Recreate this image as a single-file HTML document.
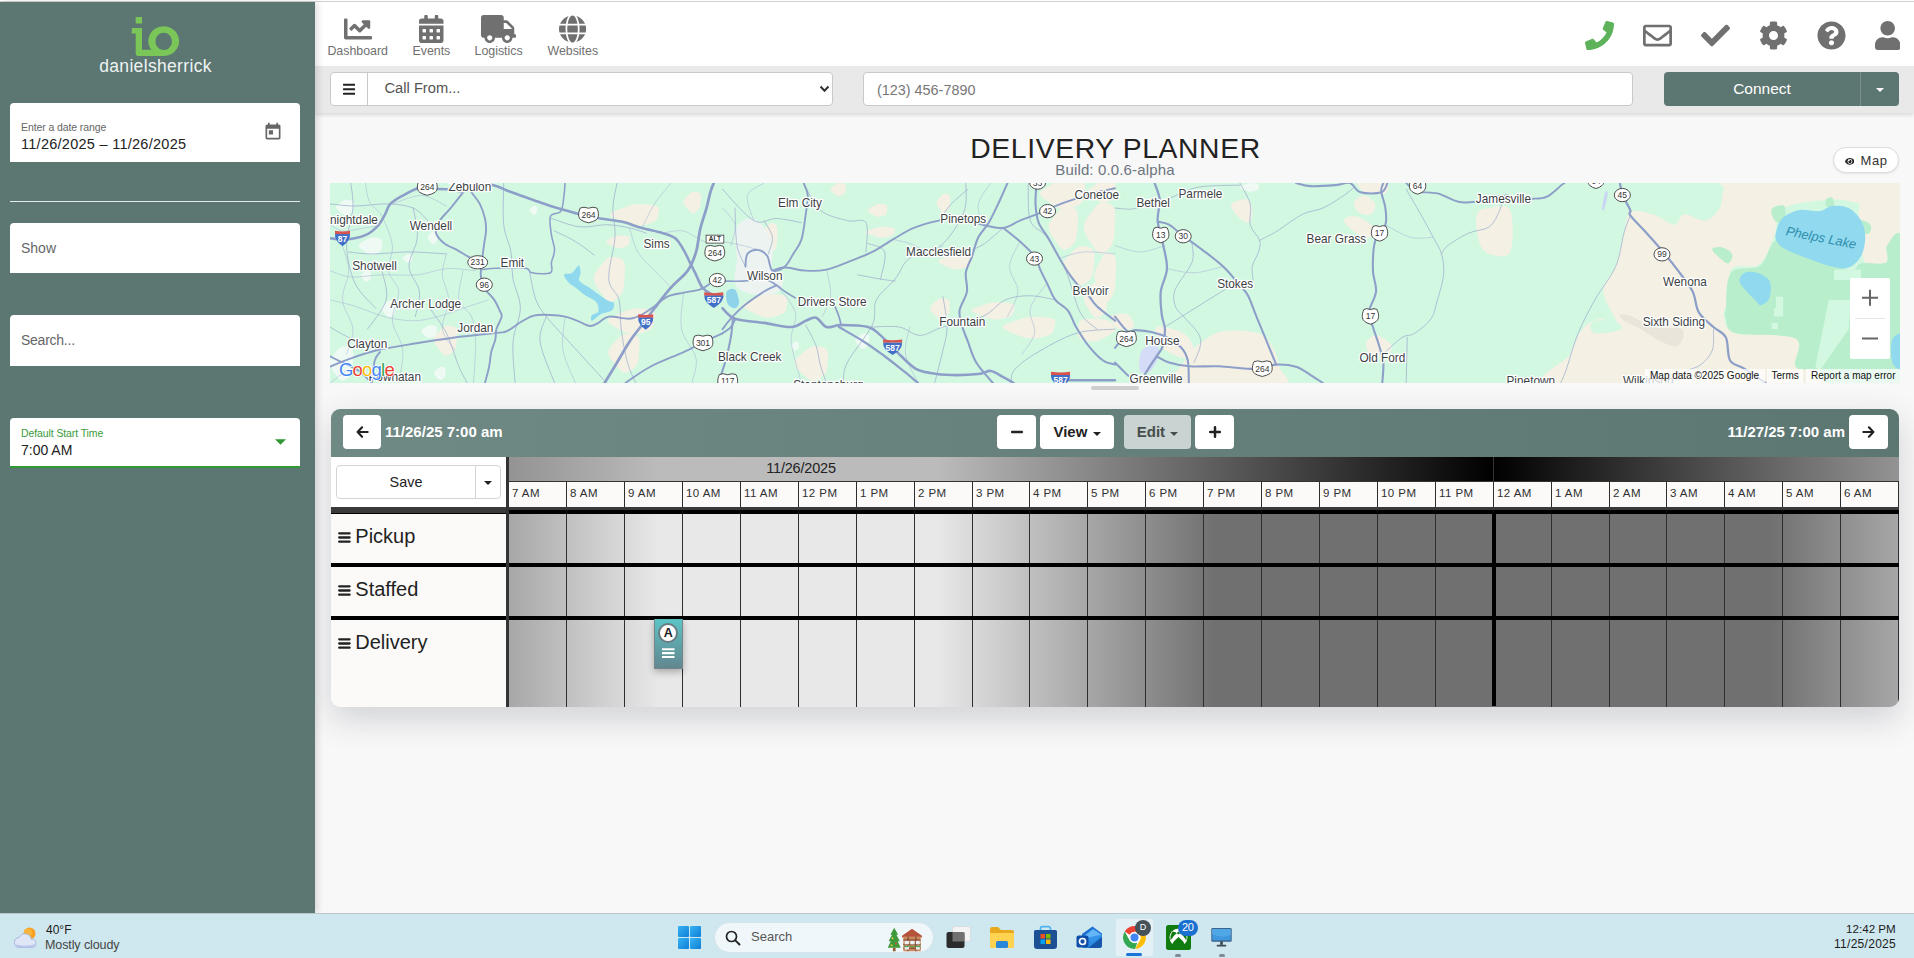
<!DOCTYPE html>
<html lang="en">
<head>
<meta charset="utf-8">
<title>Delivery Planner</title>
<style>
*{box-sizing:border-box;margin:0;padding:0}
html,body{width:1914px;height:958px;overflow:hidden;background:#f8f8f8;font-family:"Liberation Sans",sans-serif;color:#222}
.abs{position:absolute}
#topline{position:absolute;left:0;top:0;width:1914px;height:2px;background:#fff;border-bottom:1px solid #d0d0d0}
/* ---------- sidebar ---------- */
#side{position:absolute;left:0;top:2px;width:315px;height:911px;background:#5c7672;box-shadow:3px 0 6px rgba(0,0,0,.13);z-index:5}
#side .brand{position:absolute;left:-2px;width:315px;top:54px;text-align:center;color:#eef3f2;font-size:17.5px;letter-spacing:0.33px;line-height:20px}
.field{position:absolute;left:10px;width:290px;background:#fff;border-radius:4px 4px 0 0}
.field .lbl{position:absolute;left:11px;font-size:10.5px;letter-spacing:-0.1px;color:#666;white-space:nowrap}
.field .val{position:absolute;left:11px;font-size:14.5px;letter-spacing:0.27px;color:#222;white-space:nowrap}
.field .ph{position:absolute;left:11px;font-size:14px;color:#666;white-space:nowrap}
/* ---------- top nav ---------- */
#nav{position:absolute;left:315px;top:2px;width:1599px;height:64px;background:#fff}
.nlab{position:absolute;top:42px;width:80px;text-align:center;white-space:nowrap;line-height:14px;font-size:12.400px;color:#707070}
.navitem{position:absolute;top:0;text-align:center;color:#707070;font-size:11.5px}
.navitem span{position:absolute;top:42px;left:0;width:100%;text-align:center;white-space:nowrap;line-height:14px}
/* ---------- toolbar ---------- */
#tool{position:absolute;left:315px;top:66px;width:1599px;height:47px;background:#e9e9e9;box-shadow:0 2px 4px rgba(0,0,0,.13)}
/* ---------- main ---------- */
#title{position:absolute;left:331.500px;width:1568px;top:129.500px;text-align:center;font-size:28.300px;line-height:36px;color:#222;letter-spacing:0.620px;white-space:nowrap}
#build{position:absolute;left:331px;width:1568px;top:161px;text-align:center;font-size:15px;letter-spacing:0.15px;line-height:17px;color:#6c757d;white-space:nowrap}
#mapbtn{position:absolute;left:1833px;top:147px;width:66px;height:26px;border:1px solid #dcdcdc;border-radius:13px;background:#fff;font-size:13.5px;color:#333;box-shadow:0 1px 2px rgba(0,0,0,.08)}
#map{position:absolute;left:330px;top:183px;width:1570px;height:200px;overflow:hidden;background:#d3f8e2}
#handle{position:absolute;left:1091px;top:386px;width:48px;height:4px;border-radius:2px;background:#cfcfcf}
/* ---------- planner ---------- */
#plan{position:absolute;left:331px;top:409px;width:1568px;height:298px;border-radius:9px;overflow:hidden;background:#fbfaf9;box-shadow:0 12px 34px rgba(30,38,60,.185)}
#phead{position:absolute;left:0;top:0;width:1568px;height:48px;background:linear-gradient(90deg,#70897f 0%,#6f8984 0%,#5c7672 100%)}
.pbtn{position:absolute;top:6px;height:34px;background:#fff;border-radius:4px;color:#222;font-weight:bold;font-size:15px;text-align:center;line-height:34px}
.ptxt{position:absolute;top:6px;height:34px;line-height:34px;color:#fff;font-weight:bold;font-size:15px;white-space:nowrap;letter-spacing:0}

.caret.abs{position:absolute}
.caret{display:inline-block;width:0;height:0;border-left:4.5px solid transparent;border-right:4.5px solid transparent;border-top:4.5px solid #222;vertical-align:1px;margin-left:1px}
.dg{background:linear-gradient(90deg,#000 0%,#929292 29%,#bbb 40%,#bbb 60%,#000 100%)}
.rg{background:linear-gradient(90deg,#707070 0%,#707070 20%,#e8e8e8 40%,#e8e8e8 60%,#707070 80%,#707070 100%)}
.tl{position:absolute;top:73px;height:25px;line-height:23px;font-size:11.500px;letter-spacing:0.450px;color:#303030;white-space:nowrap}
.vl{position:absolute;width:1px;background:#2e2e2e}
.rl{position:absolute;left:7px;height:49px;white-space:nowrap;color:#222}
.rl svg{position:absolute;left:0;top:18px}
.rl span{position:absolute;left:17.300px;top:2px;font-size:20px;line-height:40px}
/* ---------- taskbar ---------- */
#task{z-index:6;position:absolute;left:0;top:913px;width:1914px;height:45px;background:#cfe7ee;border-top:1px solid #b9c6ca}
</style>
</head>
<body>
<div id="topline"></div>

<!-- SIDEBAR -->
<div id="side">
  <svg class="abs" style="left:128px;top:12px" width="56" height="44" viewBox="128 14 56 44">
    <g fill="#7ac658">
      <rect x="135.7" y="17" width="6.3" height="6.5"/>
      <path d="M132 28 H142 V49.800 H163 V56 H138.500 a2.8 2.8 0 0 1 -2.8 -2.8 V33.6 H131.5 Z"/>
      <path fill-rule="evenodd" d="M163.700 26.350 a15.450 14.800 0 1 0 0.010 0 Z M163.700 32.700 a8.200 8.700 0 1 1 -0.010 0 Z"/>
    </g>
  </svg>
  <div class="brand">danielsherrick</div>

  <div class="field" id="f1" style="top:101px;height:59px">
    <div class="lbl" style="top:18px">Enter a date range</div>
    <div class="val" style="top:33px">11/26/2025 – 11/26/2025</div>
    <svg class="abs" style="left:252.700px;top:18.500px" width="20" height="20" viewBox="0 0 24 24"><path fill="#666" d="M19 3h-1V1h-2v2H8V1H6v2H5c-1.11 0-2 .9-2 2v14c0 1.1.89 2 2 2h14c1.1 0 2-.9 2-2V5c0-1.1-.9-2-2-2zm0 16H5V8h14v11zM7 10h5v5H7z"/></svg>
  </div>
  <div class="abs" style="left:10px;top:199px;width:290px;height:1px;background:#e6ecea"></div>
  <div class="field" id="f2" style="top:221px;height:50px"><div class="ph" style="top:17px">Show</div></div>
  <div class="field" id="f3" style="top:313px;height:51px"><div class="ph" style="top:17px;letter-spacing:-0.25px">Search...</div></div>
  <div class="field" id="f4" style="top:416px;height:50px;border-bottom:2px solid #2f9a33">
    <div class="lbl" style="top:9px;color:#3a9a3c">Default Start Time</div>
    <div class="val" style="top:24px;letter-spacing:0;font-size:14px">7:00 AM</div>
    <svg class="abs" style="left:265px;top:21px" width="11" height="6" viewBox="0 0 10 5"><path d="M0 0h10L5 5z" fill="#2f9a33"/></svg>
  </div>
</div>

<!-- TOP NAV -->
<div id="nav">
<svg class="abs" style="left:28.7px;top:12.5px" width="28.00" height="28" viewBox="0 0 512 512"><path fill="#707070" d="M496 384H64V80c0-8.84-7.16-16-16-16H16C7.16 64 0 71.16 0 80v336c0 17.67 14.33 32 32 32h464c8.84 0 16-7.16 16-16v-32c0-8.84-7.16-16-16-16zM464 96H345.94c-21.38 0-32.09 25.85-16.97 40.97l32.4 32.4L288 242.75l-73.37-73.37c-12.5-12.5-32.76-12.5-45.25 0l-68.69 68.69c-6.25 6.25-6.25 16.38 0 22.63l22.62 22.62c6.25 6.25 16.38 6.25 22.63 0L192 237.25l73.37 73.37c12.5 12.5 32.76 12.5 45.25 0l96-96 32.4 32.4c15.12 15.12 40.97 4.41 40.97-16.97V112c.01-8.84-7.15-16-15.99-16z"/></svg>
<div class="nlab" style="left:2.7px">Dashboard</div>
<svg class="abs" style="left:104.1px;top:12.5px" width="24.50" height="28" viewBox="0 0 448 512"><path fill="#707070" d="M0 464c0 26.5 21.5 48 48 48h352c26.5 0 48-21.5 48-48V192H0v272zm320-196c0-6.6 5.4-12 12-12h40c6.6 0 12 5.4 12 12v40c0 6.6-5.4 12-12 12h-40c-6.6 0-12-5.4-12-12v-40zm0 128c0-6.6 5.4-12 12-12h40c6.6 0 12 5.4 12 12v40c0 6.6-5.4 12-12 12h-40c-6.6 0-12-5.4-12-12v-40zM192 268c0-6.6 5.4-12 12-12h40c6.6 0 12 5.4 12 12v40c0 6.6-5.4 12-12 12h-40c-6.6 0-12-5.4-12-12v-40zm0 128c0-6.6 5.4-12 12-12h40c6.6 0 12 5.4 12 12v40c0 6.6-5.4 12-12 12h-40c-6.6 0-12-5.4-12-12v-40zM64 268c0-6.6 5.4-12 12-12h40c6.6 0 12 5.4 12 12v40c0 6.6-5.4 12-12 12H76c-6.6 0-12-5.4-12-12v-40zm0 128c0-6.6 5.4-12 12-12h40c6.6 0 12 5.4 12 12v40c0 6.6-5.4 12-12 12H76c-6.6 0-12-5.4-12-12v-40zM400 64h-48V16c0-8.8-7.2-16-16-16h-32c-8.8 0-16 7.2-16 16v48H160V16c0-8.8-7.2-16-16-16h-32c-8.8 0-16 7.2-16 16v48H48C21.5 64 0 85.5 0 112v48h448v-48c0-26.5-21.5-48-48-48z"/></svg>
<div class="nlab" style="left:76.4px">Events</div>
<svg class="abs" style="left:166.1px;top:12.5px" width="35.00" height="28" viewBox="0 0 640 512"><path fill="#707070" d="M624 352h-16V243.9c0-12.7-5.1-24.9-14.1-33.9L494 110.100c-9-9-21.2-14.1-33.9-14.1H416V48c0-26.5-21.5-48-48-48H48C21.5 0 0 21.5 0 48v320c0 26.5 21.5 48 48 48h16c0 53 43 96 96 96s96-43 96-96h128c0 53 43 96 96 96s96-43 96-96h48c8.8 0 16-7.2 16-16v-32c0-8.8-7.2-16-16-16zM160 464c-26.5 0-48-21.5-48-48s21.5-48 48-48 48 21.5 48 48-21.5 48-48 48zm320 0c-26.5 0-48-21.5-48-48s21.5-48 48-48 48 21.5 48 48-21.5 48-48 48zm80-208H416V144h44.1l99.900 99.900V256z"/></svg>
<div class="nlab" style="left:143.6px">Logistics</div>
<svg class="abs" style="left:244.2px;top:12.5px" width="27.12" height="28" viewBox="0 0 496 512"><path fill="#707070" d="M336.5 160C322 70.7 287.8 8 248 8s-74 62.7-88.5 152h177zM152 256c0 22.2 1.2 43.5 3.300 64h185.300c2.100-20.500 3.300-41.800 3.300-64s-1.200-43.500-3.300-64H155.300c-2.100 20.500-3.300 41.800-3.300 64zm324.700-96c-28.600-67.900-86.500-120.400-158-141.600 24.400 33.800 41.200 84.700 50 141.600h108zM177.200 18.400C105.800 39.600 47.800 92.100 19.300 160h108c8.700-56.900 25.500-107.800 49.900-141.600zM487.400 192H372.700c2.100 21 3.300 42.500 3.300 64s-1.200 43-3.300 64h114.600c5.500-20.500 8.600-41.800 8.600-64s-3.100-43.500-8.500-64zM120 256c0-21.500 1.200-43 3.300-64H8.600C3.200 212.500 0 233.800 0 256s3.200 43.500 8.600 64h114.600c-2-21-3.200-42.500-3.200-64zm39.500 96c14.500 89.300 48.700 152 88.500 152s74-62.700 88.500-152h-177zm159.300 141.600c71.400-21.200 129.400-73.700 158-141.600h-108c-8.800 56.900-25.600 107.800-50 141.600zM19.300 352c28.600 67.900 86.500 120.400 158 141.600-24.400-33.800-41.200-84.700-50-141.600h-108z"/></svg>
<div class="nlab" style="left:217.8px">Websites</div>
<svg class="abs" style="left:1270.0px;top:19px" width="29.00" height="29" viewBox="0 0 512 512"><path fill="#5eb25a" d="M493.4 24.6l-104-24c-11.3-2.6-22.9 3.300-27.500 13.900l-48 112c-4.200 9.800-1.400 21.300 6.900 28l60.600 49.600c-36 76.700-98.900 140.500-177.200 177.200l-49.600-60.600c-6.800-8.300-18.200-11.100-28-6.900l-112 48C3.900 366.500-2 378.100.6 389.400l24 104C27.100 504.200 36.700 512 48 512c256.100 0 464-207.500 464-464 0-11.200-7.700-20.900-18.600-23.400z"/></svg>
<svg class="abs" style="left:1328.0px;top:19px" width="29.00" height="29" viewBox="0 0 512 512"><path fill="#707070" d="M464 64H48C21.490 64 0 85.490 0 112v288c0 26.510 21.490 48 48 48h416c26.510 0 48-21.490 48-48V112c0-26.510-21.490-48-48-48zm0 48v40.805c-22.422 18.259-58.168 46.651-134.587 106.490-16.841 13.247-50.201 45.072-73.413 44.701-23.208.375-56.579-31.459-73.413-44.701C106.180 199.465 70.425 171.067 48 152.805V112h416zM48 400V214.398c22.914 18.251 55.409 43.862 104.938 82.646 21.857 17.205 60.134 55.186 103.062 54.955 42.717.231 80.509-37.199 103.053-54.947 49.528-38.783 82.032-64.401 104.947-82.653V400H48z"/></svg>
<svg class="abs" style="left:1386.0px;top:19px" width="29.00" height="29" viewBox="0 0 512 512"><path fill="#707070" d="M173.898 439.404l-166.400-166.400c-9.997-9.997-9.997-26.206 0-36.204l36.203-36.204c9.997-9.998 26.207-9.998 36.204 0L192 312.690 432.095 72.596c9.997-9.997 26.207-9.997 36.204 0l36.203 36.204c9.997 9.997 9.997 26.206 0 36.204l-294.400 294.401c-9.998 9.997-26.207 9.997-36.204-.001z"/></svg>
<svg class="abs" style="left:1444.0px;top:19px" width="29.00" height="29" viewBox="0 0 512 512"><path fill="#707070" d="M487.4 315.700l-42.600-24.600c4.300-23.200 4.300-47 0-70.200l42.600-24.600c4.900-2.800 7.100-8.600 5.500-14-11.100-35.600-30-67.800-54.700-94.600-3.800-4.100-10-5.100-14.800-2.300L380.800 110c-17.900-15.400-38.500-27.300-60.800-35.100V25.800c0-5.600-3.900-10.500-9.400-11.700-36.700-8.200-74.300-7.800-109.200 0-5.500 1.200-9.400 6.100-9.400 11.700V75c-22.200 7.900-42.800 19.800-60.800 35.100L88.700 85.500c-4.900-2.800-11-1.900-14.800 2.300-24.700 26.700-43.600 58.900-54.700 94.600-1.700 5.400.6 11.200 5.500 14L67.300 221c-4.300 23.200-4.300 47 0 70.200l-42.600 24.600c-4.900 2.800-7.100 8.600-5.500 14 11.100 35.600 30 67.800 54.700 94.600 3.800 4.100 10 5.100 14.800 2.300l42.600-24.600c17.900 15.400 38.500 27.300 60.800 35.100v49.200c0 5.600 3.900 10.500 9.400 11.700 36.700 8.200 74.300 7.800 109.200 0 5.500-1.200 9.400-6.100 9.400-11.700v-49.200c22.200-7.900 42.800-19.800 60.800-35.100l42.600 24.600c4.900 2.800 11 1.900 14.800-2.300 24.700-26.700 43.600-58.900 54.700-94.600 1.500-5.500-.7-11.300-5.600-14.100zM256 336c-44.100 0-80-35.900-80-80s35.900-80 80-80 80 35.900 80 80-35.900 80-80 80z"/></svg>
<svg class="abs" style="left:1502.0px;top:19px" width="29.00" height="29" viewBox="0 0 512 512"><path fill="#707070" d="M504 256c0 136.997-111.043 248-248 248S8 392.997 8 256C8 119.083 119.043 8 256 8s248 111.083 248 248zM262.655 90c-54.497 0-89.255 22.957-116.549 63.758-3.536 5.286-2.353 12.415 2.715 16.258l34.699 26.310c5.205 3.947 12.621 3.008 16.665-2.122 17.864-22.658 30.113-35.797 57.303-35.797 20.429 0 45.698 13.148 45.698 32.958 0 14.976-12.363 22.667-32.534 33.976C247.128 238.528 216 254.941 216 296v4c0 6.627 5.373 12 12 12h56c6.627 0 12-5.373 12-12v-1.333c0-28.462 83.186-29.647 83.186-106.667 0-58.002-60.165-102-116.531-102zM256 338c-25.365 0-46 20.635-46 46 0 25.364 20.635 46 46 46s46-20.636 46-46c0-25.365-20.635-46-46-46z"/></svg>
<svg class="abs" style="left:1560.0px;top:19px" width="25.38" height="29" viewBox="0 0 448 512"><path fill="#707070" d="M224 256c70.700 0 128-57.300 128-128S294.700 0 224 0 96 57.300 96 128s57.300 128 128 128zm89.600 32h-16.700c-22.200 10.200-46.900 16-72.900 16s-50.600-5.800-72.900-16h-16.700C60.200 288 0 348.200 0 422.400V464c0 26.500 21.500 48 48 48h352c26.500 0 48-21.500 48-48v-41.600c0-74.200-60.200-134.400-134.400-134.400z"/></svg>
</div>

<!-- TOOLBAR -->
<div id="tool">
<div class="abs" style="left:15px;top:6px;width:503px;height:34px;background:#fff;border:1px solid #c9c9c9;border-radius:4px"></div>
<div class="abs" style="left:52px;top:6px;width:1px;height:34px;background:#c9c9c9"></div>
<svg class="abs" style="left:27.5px;top:15.5px" width="12.69" height="14.5" viewBox="0 0 448 512"><path fill="#222" d="M16 132h416c8.837 0 16-7.163 16-16V76c0-8.837-7.163-16-16-16H16C7.163 60 0 67.163 0 76v40c0 8.837 7.163 16 16 16zm0 160h416c8.837 0 16-7.163 16-16v-40c0-8.837-7.163-16-16-16H16c-8.837 0-16 7.163-16 16v40c0 8.837 7.163 16 16 16zm0 160h416c8.837 0 16-7.163 16-16v-40c0-8.837-7.163-16-16-16H16c-8.837 0-16 7.163-16 16v40c0 8.837 7.163 16 16 16z"/></svg>
<div class="abs" id="callfrom" style="left:69.500px;top:6px;height:34px;line-height:33px;font-size:14.7px;color:#555;white-space:nowrap">Call From...</div>
<svg class="abs" style="left:504px;top:19px" width="11" height="8" viewBox="0 0 11 8"><path d="M1.5 1.5L5.5 5.8L9.500 1.500" fill="none" stroke="#333" stroke-width="2"/></svg>
<div class="abs" style="left:548px;top:6px;width:770px;height:34px;background:#fff;border:1px solid #c9c9c9;border-radius:4px"></div>
<div class="abs" id="phoneph" style="left:562px;top:6.500px;height:34px;line-height:34px;font-size:14.400px;color:#777;white-space:nowrap">(123) 456-7890</div>
<div class="abs" style="left:1349px;top:6px;width:235px;height:34px;background:#5c7672;border-radius:4px"></div>
<div class="abs" style="left:1545px;top:6px;width:1px;height:34px;background:#7b918d"></div>
<div class="abs" id="connect" style="left:1349px;top:6px;width:196px;height:34px;line-height:33px;font-size:15.5px;color:#fff;text-align:center">Connect</div>
<i class="caret abs" style="left:1560px;top:22px;border-top-color:#fff;border-width:4.5px 4.5px 0 4.5px"></i>
</div>

<!-- MAIN -->
<div id="title">DELIVERY PLANNER</div>
<div id="build">Build: 0.0.6-alpha</div>
<div id="mapbtn"><svg class="abs" style="left:10.500px;top:8.500px" width="9.90" height="8.8" viewBox="0 0 576 512"><path fill="#222" d="M572.52 241.400C518.290 135.590 410.930 64 288 64S57.680 135.640 3.480 241.410a32.350 32.350 0 0 0 0 29.190C57.710 376.410 165.070 448 288 448s230.320-71.640 284.520-177.410a32.350 32.350 0 0 0 0-29.190zM288 400a144 144 0 1 1 144-144 143.930 143.930 0 0 1-144 144zm0-240a95.310 95.310 0 0 0-25.310 3.790 47.850 47.850 0 0 1-66.900 66.900A95.780 95.780 0 1 0 288 160z"/></svg><div class="abs" style="left:26.500px;top:0.500px;height:24px;line-height:24px;font-size:13px;letter-spacing:0.550px;color:#333">Map</div></div>
<div id="map">
<!--MAP-->
<svg class="abs" style="left:0;top:0" width="1570" height="200" viewBox="-1 0 1570 200">
<rect x="-1" width="1570" height="200" fill="#d3f8e2"/>
<g transform="translate(-1 0) scale(1.00128 1.00503)">
<path d="M1298.6 29.1 C1303.4 26.0 1314.1 29.1 1321.4 31.2 C1328.7 33.2 1337.0 41.5 1342.2 41.5 C1347.4 41.5 1347.4 31.9 1352.6 31.2 C1357.8 30.5 1367.5 38.4 1373.3 37.4 C1379.2 36.4 1384.8 30.1 1387.9 24.9 C1391.0 19.7 1389.6 11.1 1392.0 6.2 C1394.5 1.4 1372.6 -2.4 1402.4 -4.2 C1432.2 -5.9 1542.6 -9.3 1570.7 -4.2 C1598.7 1.0 1577.6 22.9 1570.7 27.0 C1563.8 31.2 1540.9 22.5 1529.1 20.8 C1517.4 19.0 1512.9 15.9 1500.1 16.6 C1487.2 17.3 1462.0 18.7 1452.3 24.9 C1442.6 31.2 1446.0 44.7 1441.9 54.0 C1437.7 63.4 1434.3 75.8 1427.4 81.0 C1420.4 86.2 1405.5 79.3 1400.3 85.2 C1395.2 91.1 1397.6 108.4 1396.2 116.3 C1394.8 124.3 1390.7 127.4 1392.0 132.9 C1393.4 138.5 1392.7 146.1 1404.5 149.6 C1416.3 153.0 1452.3 148.5 1462.7 153.7 C1473.1 158.9 1462.7 175.2 1466.8 180.7 C1471.0 186.3 1482.1 183.1 1487.6 187.0 C1493.1 190.8 1543.3 200.8 1500.1 203.6 C1456.8 206.3 1271.6 209.1 1227.9 203.6 C1184.3 198.0 1234.5 180.0 1238.3 170.3 C1242.1 160.6 1245.6 151.3 1250.8 145.4 C1256.0 139.5 1263.2 135.0 1269.5 135.0 C1275.7 135.0 1287.8 149.9 1288.2 145.4 C1288.5 140.9 1272.2 118.4 1271.6 108.0 C1270.9 97.6 1280.6 92.8 1284.0 83.1 C1287.5 73.4 1289.9 58.9 1292.3 49.9 C1294.8 40.9 1293.7 32.2 1298.6 29.1 Z" fill="#f4f0e4"/>
<path d="M1529.1 18.7 C1535.4 9.0 1563.8 15.6 1570.7 22.9 C1577.6 30.1 1573.1 55.7 1570.7 62.3 C1568.3 68.9 1558.9 59.5 1556.1 62.3 C1553.4 65.1 1557.9 75.8 1554.1 78.9 C1550.3 82.1 1537.4 91.1 1533.3 81.0 C1529.1 71.0 1522.9 28.4 1529.1 18.7 Z" fill="#f4f0e4"/>
<path d="M1394.1 124.6 C1395.0 117.0 1393.6 96.4 1399.3 89.3 C1405.0 82.2 1420.9 87.4 1428.4 82.1 C1435.8 76.7 1437.6 59.2 1444.0 57.1 C1450.4 55.0 1454.7 64.7 1466.8 69.6 C1478.9 74.4 1506.3 84.5 1516.7 86.2 C1527.1 87.9 1522.9 81.2 1529.1 80.0 C1535.4 78.8 1549.7 81.9 1554.1 78.9 C1558.4 76.0 1552.3 65.4 1555.1 62.3 C1557.9 59.2 1568.1 36.7 1570.7 60.2 C1573.3 83.8 1582.5 179.7 1570.7 203.6 C1558.9 227.5 1513.9 206.3 1500.1 203.6 C1486.2 200.8 1493.6 190.4 1487.6 187.0 C1481.5 183.5 1467.7 188.2 1463.7 182.8 C1459.7 177.4 1473.6 160.3 1463.7 154.8 C1453.8 149.2 1416.1 152.9 1404.5 149.6 C1392.9 146.3 1395.8 139.2 1394.1 135.0 C1392.4 130.9 1393.2 132.3 1394.1 124.6 Z" fill="#b8eecb"/>
<path d="M1380.6 65.4 C1381.3 64.0 1386.7 63.1 1390.0 64.0 C1393.2 64.8 1399.3 68.0 1400.3 70.6 C1401.4 73.3 1398.6 79.6 1396.2 80.0 C1393.8 80.3 1388.4 75.1 1385.8 72.7 C1383.2 70.3 1379.9 66.9 1380.6 65.4 Z" fill="#b8eecb"/>
<path d="M1439.8 26.0 C1441.4 23.5 1450.2 20.6 1452.3 22.9 C1454.4 25.1 1453.8 37.0 1452.3 39.5 C1450.7 41.9 1445.0 39.6 1442.9 37.4 C1440.9 35.1 1438.3 28.4 1439.8 26.0 Z" fill="#b8eecb"/>
<path d="M1493.8 16.6 C1494.7 15.1 1498.7 13.5 1500.1 14.5 C1501.4 15.6 1503.0 21.3 1502.1 22.9 C1501.3 24.4 1496.2 24.9 1494.9 23.9 C1493.5 22.9 1493.0 18.2 1493.8 16.6 Z" fill="#b8eecb"/>
<path d="M1529.1 37.4 C1530.5 36.2 1537.1 39.5 1538.5 41.5 C1539.9 43.6 1538.8 48.6 1537.4 49.9 C1536.1 51.1 1531.6 50.9 1530.2 48.8 C1528.8 46.7 1527.8 38.6 1529.1 37.4 Z" fill="#b8eecb"/>
<path d="M1496.9 116.3 L1518.8 116.3 L1516.7 145.4 L1487.6 187.0 L1483.4 182.8 Z" fill="#d3f8e2"/>
<rect x="1502.1" y="86.2" width="27.0" height="10.4" fill="#d3f8e2"/>
<path d="M1444.0 113.2 h7.3 v19.7 h-9.3 v-8.3 h2.1 Z" fill="#d3f8e2"/>
<rect x="1439.8" y="139.2" width="6.2" height="6.2" fill="#d3f8e2"/>
<path d="M1263.2 137.1 C1267.4 135.9 1279.7 136.8 1284.0 138.1 C1288.3 139.5 1292.0 143.5 1289.2 145.4 C1286.4 147.3 1272.4 149.6 1267.4 149.6 C1262.4 149.6 1259.8 147.5 1259.1 145.4 C1258.4 143.3 1259.1 138.3 1263.2 137.1 Z" fill="#d3f8e2"/>
<path d="M1288.2 130.9 C1289.6 130.2 1295.1 130.9 1300.6 132.9 C1306.2 135.0 1313.1 141.3 1321.4 143.3 C1329.7 145.4 1346.3 142.3 1350.5 145.4 C1354.6 148.5 1349.8 160.0 1346.3 162.0 C1342.9 164.1 1336.0 160.6 1329.7 157.9 C1323.5 155.1 1315.2 148.9 1308.9 145.4 C1302.7 141.9 1295.8 139.5 1292.3 137.1 C1288.9 134.7 1286.8 131.6 1288.2 130.9 Z" fill="#e9e5da"/>
<path d="M1444.0 49.9 C1444.8 46.0 1446.4 39.1 1450.2 35.3 C1454.0 31.5 1460.6 28.2 1466.8 27.0 C1473.1 25.8 1482.1 28.7 1487.6 28.0 C1493.1 27.4 1495.2 23.4 1500.1 22.9 C1504.9 22.3 1511.8 22.5 1516.7 24.9 C1521.5 27.4 1526.4 32.5 1529.1 37.4 C1531.9 42.2 1533.3 48.1 1533.3 54.0 C1533.3 59.9 1531.9 67.7 1529.1 72.7 C1526.4 77.7 1521.5 82.4 1516.7 84.1 C1511.8 85.9 1507.0 84.6 1500.1 83.1 C1493.1 81.5 1482.7 77.6 1475.1 74.8 C1467.5 72.0 1459.4 69.2 1454.4 66.5 C1449.3 63.7 1446.7 60.9 1445.0 58.2 C1443.3 55.4 1443.1 53.7 1444.0 49.9 Z" fill="#90d9ee"/>
<path d="M1407.6 97.6 C1407.3 94.5 1409.9 90.7 1412.8 89.3 C1415.8 87.9 1421.1 87.9 1425.3 89.3 C1429.4 90.7 1435.7 93.5 1437.7 97.6 C1439.8 101.8 1439.1 110.3 1437.7 114.3 C1436.4 118.2 1431.9 121.2 1429.4 121.5 C1427.0 121.9 1425.6 118.6 1423.2 116.3 C1420.8 114.1 1417.5 111.1 1414.9 108.0 C1412.3 104.9 1408.0 100.7 1407.6 97.6 Z" fill="#90d9ee"/>
<path d="M1560.3 155.8 C1562.0 151.3 1569.0 147.0 1570.7 151.6 C1572.4 156.3 1572.4 179.3 1570.7 183.8 C1569.0 188.3 1562.0 183.3 1560.3 178.6 C1558.6 174.0 1558.6 160.3 1560.3 155.8 Z" fill="#90d9ee"/>
<path d="M1270.5 24.9 C1270.7 22.2 1272.7 11.8 1273.6 9.3 C1274.6 6.9 1276.3 7.6 1276.1 10.4 C1276.0 13.2 1273.5 23.5 1272.6 26.0 C1271.7 28.4 1270.3 27.7 1270.5 24.9 Z" fill="#c9d5f5"/>
<path d="M900.3 20.8 C902.1 18.0 913.5 14.9 916.9 16.6 C920.4 18.3 921.1 27.4 921.1 31.2 C921.1 35.0 919.4 39.1 916.9 39.5 C914.5 39.8 909.3 36.4 906.6 33.2 C903.8 30.1 898.6 23.5 900.3 20.8 Z" fill="#f4f0e4"/>
<path d="M1012.5 37.4 C1012.5 34.6 1020.1 32.2 1025.0 33.2 C1029.8 34.3 1039.2 40.2 1041.6 43.6 C1044.0 47.1 1042.3 53.0 1039.5 54.0 C1036.7 55.0 1029.5 52.6 1025.0 49.9 C1020.5 47.1 1012.5 40.2 1012.5 37.4 Z" fill="#f4f0e4"/>
<path d="M1022.9 18.7 C1023.9 15.9 1029.8 12.1 1033.3 12.5 C1036.7 12.8 1042.6 17.7 1043.7 20.8 C1044.7 23.9 1042.3 29.8 1039.5 31.2 C1036.7 32.5 1029.8 31.2 1027.0 29.1 C1024.3 27.0 1021.8 21.5 1022.9 18.7 Z" fill="#f4f0e4"/>
<path d="M1027.0 -2.1 C1030.5 -4.0 1049.5 -4.2 1054.0 -2.1 C1058.5 0.0 1057.5 8.5 1054.0 10.4 C1050.6 12.3 1037.8 11.4 1033.3 9.3 C1028.8 7.3 1023.6 -0.2 1027.0 -2.1 Z" fill="#f4f0e4"/>
<path d="M871.2 157.9 C876.8 154.1 882.7 148.9 892.0 147.5 C901.4 146.1 919.0 146.8 927.3 149.6 C935.6 152.3 938.4 158.6 941.9 164.1 C945.3 169.6 946.7 176.2 948.1 182.8 C949.5 189.4 967.1 200.1 950.2 203.6 C933.2 207.0 861.6 209.1 846.3 203.6 C831.1 198.0 854.6 178.0 858.8 170.3 C862.9 162.7 865.7 161.7 871.2 157.9 Z" fill="#f4f0e4"/>
<path d="M1035.4 157.9 C1036.7 155.1 1041.6 150.9 1045.7 151.6 C1049.9 152.3 1058.9 158.6 1060.3 162.0 C1061.7 165.5 1057.9 171.4 1054.0 172.4 C1050.2 173.5 1040.5 170.7 1037.4 168.3 C1034.3 165.8 1034.0 160.6 1035.4 157.9 Z" fill="#f4f0e4"/>
<path d="M1145.4 31.2 C1147.2 25.6 1152.4 25.6 1157.9 24.9 C1163.4 24.2 1175.2 19.7 1178.7 27.0 C1182.1 34.3 1182.1 61.3 1178.7 68.6 C1175.2 75.8 1163.1 72.4 1157.9 70.6 C1152.7 68.9 1149.6 64.7 1147.5 58.2 C1145.4 51.6 1143.7 36.7 1145.4 31.2 Z" fill="#f4f0e4"/>
<path d="M779.8 132.9 C781.2 130.5 792.7 129.1 796.5 130.9 C800.3 132.6 804.1 140.9 802.7 143.3 C801.3 145.8 792.0 147.1 788.2 145.4 C784.3 143.7 778.5 135.4 779.8 132.9 Z" fill="#f4f0e4"/>
<path d="M811.0 166.2 C813.8 162.0 822.8 161.0 825.5 162.0 C828.3 163.1 828.7 168.3 827.6 172.4 C826.6 176.6 822.4 184.5 819.3 187.0 C816.2 189.4 810.3 190.4 808.9 187.0 C807.5 183.5 808.2 170.3 811.0 166.2 Z" fill="#d5dcf7"/>
<path d="M825.5 143.3 C829.0 140.9 846.3 145.8 852.6 149.6 C858.8 153.4 862.6 162.0 862.9 166.2 C863.3 170.3 859.8 174.8 854.6 174.5 C849.4 174.1 836.6 169.3 831.8 164.1 C826.9 158.9 822.1 145.8 825.5 143.3 Z" fill="#f4f0e4"/>
<path d="M515.1 6.2 C515.0 7.7 515.1 9.3 514.0 10.5 C512.8 11.6 510.1 13.1 508.3 13.1 C506.5 13.0 504.5 11.3 503.1 10.2 C501.7 9.0 499.7 7.5 499.8 6.2 C499.8 5.0 502.1 3.6 503.5 2.6 C504.9 1.6 506.4 0.5 508.3 0.2 C510.2 0.0 513.7 0.4 514.8 1.4 C515.9 2.4 515.3 4.7 515.1 6.2 Z" fill="#f4f0e4"/>
<path d="M556.3 27.0 C556.1 28.5 556.3 30.1 554.8 31.2 C553.4 32.4 550.1 33.9 547.8 33.9 C545.5 33.8 543.0 32.1 541.3 30.9 C539.5 29.8 537.0 28.3 537.1 27.0 C537.2 25.7 540.0 24.4 541.8 23.4 C543.6 22.4 545.4 21.2 547.8 21.0 C550.1 20.8 554.5 21.2 555.9 22.2 C557.3 23.2 556.5 25.5 556.3 27.0 Z" fill="#f4f0e4"/>
<path d="M563.7 48.8 C563.4 50.1 563.6 51.4 561.5 52.3 C559.4 53.3 554.3 54.6 550.9 54.5 C547.5 54.5 543.8 53.0 541.1 52.1 C538.4 51.1 534.7 49.9 534.9 48.8 C535.0 47.8 539.2 46.6 541.9 45.8 C544.6 45.0 547.4 44.0 550.9 43.8 C554.4 43.7 560.9 43.9 563.0 44.8 C565.2 45.6 563.9 47.6 563.7 48.8 Z" fill="#f4f0e4"/>
<path d="M619.2 19.7 C619.1 22.0 619.2 24.4 618.2 26.1 C617.2 27.8 614.8 30.1 613.2 30.0 C611.6 29.9 609.9 27.3 608.7 25.6 C607.4 23.9 605.7 21.6 605.7 19.7 C605.8 17.9 607.8 15.8 609.0 14.3 C610.3 12.8 611.6 11.1 613.2 10.8 C614.9 10.5 617.9 11.0 618.9 12.5 C619.9 14.0 619.3 17.5 619.2 19.7 Z" fill="#f4f0e4"/>
<path d="M640.2 77.9 C639.9 79.7 640.1 81.5 637.7 82.8 C635.3 84.2 629.5 86.0 625.7 85.9 C621.8 85.8 617.6 83.8 614.6 82.5 C611.6 81.1 607.4 79.4 607.5 77.9 C607.7 76.4 612.4 74.8 615.5 73.7 C618.5 72.5 621.7 71.2 625.7 70.9 C629.7 70.7 637.0 71.1 639.4 72.2 C641.8 73.4 640.5 76.1 640.2 77.9 Z" fill="#f4f0e4"/>
<path d="M618.6 124.6 C618.5 127.2 618.6 129.8 617.2 131.7 C615.7 133.6 612.4 136.1 610.1 136.1 C607.8 136.0 605.4 133.1 603.6 131.2 C601.8 129.3 599.3 126.7 599.4 124.6 C599.5 122.5 602.3 120.3 604.1 118.6 C605.9 117.0 607.8 115.0 610.1 114.7 C612.5 114.3 616.8 114.9 618.2 116.6 C619.6 118.2 618.8 122.1 618.6 124.6 Z" fill="#f4f0e4"/>
<path d="M682.9 126.7 C682.5 128.7 682.8 130.8 679.6 132.4 C676.5 133.9 669.1 135.9 664.1 135.9 C659.1 135.8 653.7 133.5 649.7 131.9 C645.8 130.4 640.4 128.4 640.6 126.7 C640.8 125.0 647.0 123.2 650.9 121.9 C654.8 120.6 659.0 119.0 664.1 118.7 C669.3 118.5 678.8 118.9 681.9 120.3 C685.0 121.6 683.2 124.7 682.9 126.7 Z" fill="#f4f0e4"/>
<path d="M723.5 143.3 C723.0 145.9 723.3 148.5 719.5 150.4 C715.7 152.3 706.6 154.8 700.5 154.8 C694.4 154.7 687.6 151.8 682.8 149.9 C678.0 148.0 671.4 145.4 671.6 143.3 C671.8 141.2 679.4 139.0 684.2 137.3 C689.0 135.6 694.1 133.7 700.5 133.4 C706.8 133.0 718.5 133.6 722.3 135.3 C726.1 136.9 723.9 140.8 723.5 143.3 Z" fill="#f4f0e4"/>
<path d="M496.8 178.6 C496.5 182.7 496.8 186.9 494.3 189.9 C491.9 193.0 486.2 197.1 482.4 196.9 C478.5 196.8 474.3 192.2 471.2 189.1 C468.2 186.1 464.0 182.0 464.2 178.6 C464.3 175.3 469.1 171.7 472.1 169.0 C475.2 166.4 478.4 163.2 482.4 162.7 C486.4 162.1 493.7 163.1 496.1 165.7 C498.5 168.4 497.1 174.6 496.8 178.6 Z" fill="#f4f0e4"/>
<path d="M456.3 121.5 C455.9 124.3 456.1 127.2 452.9 129.3 C449.6 131.4 441.9 134.2 436.7 134.1 C431.5 134.0 425.7 130.8 421.6 128.7 C417.5 126.6 411.9 123.8 412.1 121.5 C412.3 119.2 418.7 116.7 422.8 114.9 C426.9 113.1 431.3 110.9 436.7 110.6 C442.1 110.2 452.0 110.8 455.2 112.6 C458.5 114.5 456.6 118.7 456.3 121.5 Z" fill="#f4f0e4"/>
<path d="M446.6 54.0 C446.5 57.5 446.6 61.2 445.4 63.9 C444.3 66.5 441.6 70.1 439.8 70.0 C438.0 69.9 436.0 65.8 434.5 63.2 C433.1 60.5 431.2 56.9 431.2 54.0 C431.3 51.1 433.5 47.9 435.0 45.6 C436.4 43.3 437.9 40.5 439.8 40.0 C441.7 39.6 445.1 40.4 446.2 42.7 C447.4 45.0 446.7 50.5 446.6 54.0 Z" fill="#f4f0e4"/>
<path d="M784.6 145.4 C784.2 148.0 779.2 150.6 775.8 152.6 C772.5 154.6 769.0 157.0 764.6 157.4 C760.2 157.8 752.3 157.1 749.5 155.1 C746.6 153.1 747.1 148.5 747.3 145.4 C747.4 142.3 747.5 138.0 750.4 136.3 C753.3 134.6 760.0 135.1 764.6 135.2 C769.1 135.3 774.4 135.2 777.7 136.9 C781.1 138.7 784.9 142.8 784.6 145.4 Z" fill="#f4f0e4"/>
<path d="M753.3 10.4 C752.9 13.9 753.2 17.6 749.9 20.3 C746.7 22.9 738.9 26.5 733.7 26.4 C728.5 26.3 722.8 22.2 718.7 19.5 C714.6 16.9 708.9 13.3 709.1 10.4 C709.3 7.5 715.8 4.3 719.9 2.0 C724.0 -0.4 728.3 -3.1 733.7 -3.6 C739.1 -4.1 749.0 -3.3 752.3 -0.9 C755.6 1.4 753.7 6.9 753.3 10.4 Z" fill="#f4f0e4"/>
<path d="M784.1 8.3 C783.8 10.8 784.0 13.5 782.0 15.4 C780.0 17.3 775.3 19.8 772.1 19.7 C769.0 19.6 765.5 16.7 763.0 14.8 C760.5 12.9 757.0 10.4 757.2 8.3 C757.3 6.2 761.2 3.9 763.7 2.3 C766.2 0.6 768.9 -1.3 772.1 -1.7 C775.4 -2.0 781.5 -1.4 783.5 0.2 C785.4 1.9 784.3 5.8 784.1 8.3 Z" fill="#f4f0e4"/>
<path d="M746.5 43.6 C746.2 48.7 746.4 53.9 744.3 57.7 C742.2 61.5 737.1 66.6 733.7 66.5 C730.3 66.3 726.6 60.5 723.9 56.7 C721.2 52.9 717.5 47.8 717.7 43.6 C717.8 39.4 722.0 34.9 724.7 31.6 C727.4 28.3 730.2 24.4 733.7 23.7 C737.2 23.0 743.7 24.1 745.8 27.5 C748.0 30.8 746.7 38.6 746.5 43.6 Z" fill="#f4f0e4"/>
<path d="M783.7 43.6 C783.4 49.7 783.6 56.0 781.3 60.5 C779.1 65.1 773.7 71.2 770.1 71.0 C766.4 70.8 762.5 63.9 759.6 59.3 C756.8 54.7 752.8 48.6 752.9 43.6 C753.1 38.6 757.6 33.2 760.4 29.2 C763.3 25.2 766.3 20.5 770.1 19.7 C773.8 18.9 780.7 20.2 783.0 24.2 C785.3 28.2 784.0 37.6 783.7 43.6 Z" fill="#f4f0e4"/>
<path d="M762.9 81.0 C762.6 85.6 762.8 90.3 760.6 93.7 C758.3 97.1 752.9 101.7 749.3 101.6 C745.7 101.4 741.7 96.2 738.8 92.8 C736.0 89.4 732.0 84.8 732.2 81.0 C732.3 77.2 736.8 73.2 739.7 70.2 C742.5 67.2 745.5 63.7 749.3 63.1 C753.1 62.4 759.9 63.5 762.2 66.5 C764.5 69.5 763.2 76.5 762.9 81.0 Z" fill="#f4f0e4"/>
<path d="M784.6 92.4 C784.4 98.2 784.6 104.3 783.0 108.7 C781.5 113.0 777.7 118.9 775.3 118.7 C772.8 118.5 770.0 111.9 768.1 107.5 C766.1 103.1 763.4 97.3 763.5 92.4 C763.6 87.6 766.7 82.4 768.6 78.6 C770.6 74.8 772.7 70.3 775.3 69.5 C777.8 68.7 782.6 70.0 784.1 73.9 C785.7 77.7 784.8 86.6 784.6 92.4 Z" fill="#f4f0e4"/>
<path d="M776.1 115.3 C775.9 119.6 776.1 124.0 774.4 127.3 C772.7 130.5 768.6 134.9 765.9 134.7 C763.2 134.6 760.2 129.6 758.1 126.4 C755.9 123.2 753.0 118.8 753.1 115.3 C753.2 111.7 756.5 107.9 758.7 105.1 C760.8 102.2 763.1 98.9 765.9 98.3 C768.7 97.8 773.9 98.7 775.6 101.6 C777.3 104.4 776.3 111.0 776.1 115.3 Z" fill="#f4f0e4"/>
<path d="M404.5 47.8 C406.2 41.2 412.4 36.4 416.9 35.3 C421.4 34.3 427.3 37.0 431.5 41.5 C435.6 46.0 440.1 54.7 441.9 62.3 C443.6 69.9 440.1 81.0 441.9 87.2 C443.6 93.5 451.9 95.9 452.2 99.7 C452.6 103.5 449.5 108.4 443.9 110.1 C438.4 111.8 425.6 111.8 419.0 110.1 C412.4 108.4 406.5 105.6 404.5 99.7 C402.4 93.8 406.5 83.4 406.5 74.8 C406.5 66.1 402.7 54.4 404.5 47.8 Z" fill="#ecf3f0"/>
<path d="M396.2 108.0 C397.4 105.6 402.4 104.2 404.5 105.9 C406.5 107.7 408.6 115.3 408.6 118.4 C408.6 121.5 406.4 124.3 404.5 124.6 C402.6 125.0 398.6 123.3 397.2 120.5 C395.8 117.7 394.9 110.4 396.2 108.0 Z" fill="#8fd3ea"/>
<path d="M294.1 94.5 C293.8 99.8 294.0 105.3 291.7 109.3 C289.4 113.3 284.1 118.7 280.4 118.5 C276.8 118.3 272.8 112.2 270.0 108.2 C267.1 104.2 263.2 98.9 263.3 94.5 C263.5 90.1 267.9 85.4 270.8 81.9 C273.6 78.4 276.7 74.3 280.4 73.6 C284.2 72.9 291.1 74.1 293.4 77.6 C295.6 81.0 294.3 89.2 294.1 94.5 Z" fill="#f4f0e4"/>
<path d="M323.7 137.1 C323.3 140.1 323.6 143.3 320.2 145.6 C316.8 147.8 308.7 150.9 303.3 150.8 C297.8 150.7 291.9 147.2 287.6 144.9 C283.3 142.7 277.4 139.6 277.6 137.1 C277.8 134.6 284.5 131.9 288.8 129.9 C293.1 127.9 297.6 125.5 303.3 125.1 C308.9 124.7 319.3 125.4 322.7 127.4 C326.1 129.4 324.1 134.1 323.7 137.1 Z" fill="#f4f0e4"/>
<path d="M308.6 168.3 C308.3 172.8 308.5 177.5 306.3 181.0 C304.0 184.4 298.6 189.0 295.0 188.8 C291.3 188.7 287.4 183.5 284.5 180.0 C281.7 176.6 277.7 172.0 277.9 168.3 C278.0 164.5 282.5 160.4 285.3 157.4 C288.2 154.4 291.2 150.9 295.0 150.3 C298.7 149.7 305.6 150.7 307.9 153.7 C310.2 156.7 308.9 163.7 308.6 168.3 Z" fill="#f4f0e4"/>
<path d="M327.7 31.2 C327.3 33.7 327.6 36.3 324.0 38.2 C320.5 40.1 312.1 42.7 306.4 42.6 C300.7 42.5 294.5 39.6 290.1 37.7 C285.6 35.8 279.4 33.3 279.7 31.2 C279.9 29.1 286.9 26.8 291.3 25.1 C295.8 23.5 300.5 21.5 306.4 21.2 C312.3 20.8 323.0 21.4 326.6 23.1 C330.1 24.7 328.1 28.6 327.7 31.2 Z" fill="#f4f0e4"/>
<path d="M370.1 18.7 C370.0 21.2 370.1 23.8 368.8 25.7 C367.6 27.7 364.5 30.2 362.5 30.1 C360.4 30.0 358.2 27.1 356.6 25.2 C355.0 23.3 352.8 20.8 352.9 18.7 C352.9 16.6 355.5 14.3 357.1 12.7 C358.7 11.0 360.4 9.1 362.5 8.7 C364.6 8.4 368.5 9.0 369.8 10.6 C371.0 12.3 370.3 16.2 370.1 18.7 Z" fill="#f4f0e4"/>
<path d="M299.0 58.2 C298.8 59.7 298.9 61.3 297.2 62.4 C295.5 63.5 291.5 65.1 288.7 65.0 C286.0 65.0 283.0 63.2 280.9 62.1 C278.8 60.9 275.8 59.4 275.9 58.2 C276.0 56.9 279.4 55.5 281.5 54.6 C283.7 53.6 285.9 52.4 288.7 52.2 C291.6 52.0 296.7 52.3 298.4 53.3 C300.1 54.3 299.2 56.7 299.0 58.2 Z" fill="#f4f0e4"/>
<path d="M126.5 155.8 C126.3 159.3 126.5 163.0 124.8 165.7 C123.1 168.3 119.0 171.9 116.3 171.8 C113.6 171.7 110.6 167.6 108.5 164.9 C106.3 162.3 103.4 158.7 103.5 155.8 C103.6 152.9 107.0 149.7 109.1 147.4 C111.2 145.0 113.5 142.3 116.3 141.8 C119.1 141.4 124.3 142.2 126.0 144.5 C127.7 146.8 126.8 152.3 126.5 155.8 Z" fill="#f4f0e4"/>
<path d="M233.7 91.4 C234.2 89.7 239.6 90.9 242.0 89.3 C244.4 87.8 246.8 82.1 248.2 82.1 C249.6 82.1 250.1 86.7 250.3 89.3 C250.5 91.9 247.4 94.9 249.3 97.6 C251.2 100.4 257.2 102.8 261.7 105.9 C266.2 109.1 272.6 114.1 276.3 116.3 C279.9 118.6 282.7 117.7 283.5 119.4 C284.4 121.2 283.7 124.8 281.5 126.7 C279.2 128.6 273.3 129.1 270.0 130.9 C266.8 132.6 263.2 136.9 261.7 137.1 C260.3 137.3 260.3 133.5 261.3 131.9 C262.4 130.3 267.2 130.0 268.0 127.8 C268.7 125.5 268.0 121.0 265.9 118.4 C263.8 115.8 259.0 114.6 255.5 112.2 C252.0 109.7 247.9 105.9 245.1 103.9 C242.3 101.8 240.8 101.8 238.9 99.7 C237.0 97.6 233.2 93.1 233.7 91.4 Z" fill="#8fd8ee"/>
<path d="M51.8 62.3 C51.6 64.3 51.7 66.4 50.0 68.0 C48.3 69.5 44.3 71.5 41.5 71.5 C38.8 71.4 35.8 69.1 33.7 67.5 C31.6 66.0 28.6 64.0 28.7 62.3 C28.8 60.6 32.2 58.8 34.3 57.5 C36.5 56.2 38.7 54.6 41.5 54.3 C44.4 54.1 49.5 54.5 51.2 55.9 C52.9 57.2 52.0 60.3 51.8 62.3 Z" fill="#f0faf4"/>
<path d="M65.2 124.6 C65.0 126.7 65.1 128.8 64.1 130.3 C63.1 131.8 60.8 133.8 59.2 133.8 C57.6 133.7 55.9 131.4 54.6 129.9 C53.4 128.3 51.7 126.3 51.7 124.6 C51.8 123.0 53.7 121.1 55.0 119.8 C56.2 118.5 57.6 116.9 59.2 116.7 C60.8 116.4 63.9 116.8 64.9 118.2 C65.9 119.5 65.3 122.6 65.2 124.6 Z" fill="#f0faf4"/>
<path d="M106.5 147.5 C106.4 149.0 106.5 150.6 105.3 151.7 C104.2 152.9 101.5 154.4 99.7 154.3 C97.9 154.3 95.9 152.6 94.5 151.4 C93.1 150.3 91.1 148.7 91.2 147.5 C91.2 146.2 93.5 144.9 94.9 143.9 C96.3 142.9 97.8 141.7 99.7 141.5 C101.6 141.3 105.0 141.6 106.2 142.6 C107.3 143.6 106.7 146.0 106.5 147.5 Z" fill="#f0faf4"/>
<path d="M22.7 178.6 C22.5 182.7 22.6 186.9 20.9 189.9 C19.2 193.0 15.2 197.1 12.5 196.9 C9.7 196.8 6.8 192.2 4.6 189.1 C2.5 186.1 -0.5 182.0 -0.4 178.6 C-0.3 175.3 3.1 171.7 5.2 169.0 C7.4 166.4 9.6 163.2 12.5 162.7 C15.3 162.1 20.5 163.1 22.2 165.7 C23.9 168.4 22.9 174.6 22.7 178.6 Z" fill="#f0faf4"/>
<path d="M23.2 23.9 C23.1 25.7 23.2 27.5 21.9 28.8 C20.6 30.2 17.6 31.9 15.6 31.9 C13.5 31.8 11.3 29.8 9.7 28.5 C8.1 27.1 5.9 25.4 6.0 23.9 C6.0 22.4 8.6 20.8 10.2 19.7 C11.8 18.5 13.5 17.1 15.6 16.9 C17.7 16.7 21.6 17.1 22.9 18.2 C24.1 19.4 23.4 22.1 23.2 23.9 Z" fill="#f0faf4"/>
<path d="M107.1 54.0 C107.0 55.5 107.1 57.1 106.4 58.2 C105.6 59.4 104.0 60.9 102.8 60.9 C101.7 60.8 100.4 59.1 99.6 57.9 C98.7 56.8 97.4 55.3 97.5 54.0 C97.5 52.8 98.9 51.4 99.8 50.4 C100.7 49.4 101.7 48.2 102.8 48.0 C104.0 47.8 106.2 48.2 106.9 49.2 C107.6 50.2 107.2 52.5 107.1 54.0 Z" fill="#f0faf4"/>
<path d="M207.0 27.0 C206.9 28.0 207.0 29.1 206.4 29.8 C205.8 30.6 204.5 31.6 203.6 31.6 C202.7 31.5 201.7 30.4 201.0 29.6 C200.2 28.9 199.3 27.8 199.3 27.0 C199.3 26.2 200.5 25.3 201.2 24.6 C201.9 23.9 202.6 23.2 203.6 23.0 C204.5 22.9 206.2 23.1 206.8 23.8 C207.4 24.4 207.0 26.0 207.0 27.0 Z" fill="#f0faf4"/>
<path d="M82.2 74.8 C82.1 75.8 82.1 76.8 81.4 77.6 C80.7 78.4 79.0 79.4 77.9 79.4 C76.8 79.3 75.5 78.2 74.6 77.4 C73.7 76.6 72.5 75.6 72.5 74.8 C72.6 73.9 74.0 73.0 74.9 72.4 C75.8 71.7 76.7 70.9 77.9 70.8 C79.1 70.7 81.2 70.9 81.9 71.6 C82.6 72.2 82.2 73.8 82.2 74.8 Z" fill="#f0faf4"/>
<path d="M538.2 156.8 C538.1 158.6 538.1 160.4 537.2 161.8 C536.2 163.1 533.8 164.9 532.2 164.8 C530.6 164.8 528.9 162.7 527.6 161.4 C526.4 160.1 524.7 158.3 524.7 156.8 C524.8 155.4 526.8 153.8 528.0 152.6 C529.2 151.5 530.6 150.1 532.2 149.9 C533.9 149.6 536.9 150.0 537.9 151.2 C538.9 152.3 538.3 155.1 538.2 156.8 Z" fill="#f0faf4"/>
<path d="M468.1 162.0 C468.0 163.0 468.1 164.1 467.5 164.8 C467.0 165.6 465.6 166.6 464.7 166.6 C463.8 166.6 462.8 165.4 462.1 164.6 C461.4 163.9 460.4 162.9 460.4 162.0 C460.5 161.2 461.6 160.3 462.3 159.6 C463.0 159.0 463.8 158.2 464.7 158.0 C465.6 157.9 467.4 158.1 467.9 158.8 C468.5 159.5 468.2 161.0 468.1 162.0 Z" fill="#f0faf4"/>
<path d="M927.5 4.2 C927.4 5.2 927.5 6.2 926.1 7.0 C924.7 7.7 921.3 8.8 919.0 8.7 C916.8 8.7 914.3 7.5 912.5 6.8 C910.7 6.0 908.2 5.0 908.3 4.2 C908.4 3.3 911.2 2.4 913.0 1.7 C914.8 1.1 916.7 0.3 919.0 0.2 C921.4 0.0 925.7 0.3 927.1 0.9 C928.5 1.6 927.7 3.1 927.5 4.2 Z" fill="#f0faf4"/>
<path d="M40.6 92.4 C40.5 93.7 40.6 95.0 39.9 96.0 C39.2 96.9 37.5 98.2 36.4 98.2 C35.2 98.1 34.0 96.7 33.1 95.7 C32.2 94.8 31.0 93.5 31.0 92.4 C31.0 91.4 32.4 90.3 33.3 89.4 C34.2 88.6 35.2 87.6 36.4 87.5 C37.5 87.3 39.7 87.6 40.4 88.4 C41.1 89.2 40.7 91.2 40.6 92.4 Z" fill="#f0faf4"/>
<path d="M115.2 189.0 C115.1 190.5 115.2 192.1 114.3 193.3 C113.5 194.4 111.5 195.9 110.1 195.9 C108.7 195.8 107.2 194.1 106.2 193.0 C105.1 191.8 103.6 190.3 103.7 189.0 C103.7 187.8 105.4 186.4 106.5 185.4 C107.6 184.4 108.7 183.3 110.1 183.0 C111.5 182.8 114.1 183.2 114.9 184.2 C115.8 185.2 115.3 187.5 115.2 189.0 Z" fill="#f0faf4"/>
<path d="M173.5 0.0 C173.5 6.9 172.2 30.1 173.5 41.5 C174.7 53.0 179.2 59.5 180.7 68.6 C182.3 77.6 181.2 86.2 182.8 95.6 C184.4 104.9 190.1 114.3 190.1 124.6 C190.1 135.0 183.7 145.5 182.8 157.9 C181.9 170.3 184.5 192.1 184.9 199.0" fill="none" stroke="#9fb0cf" stroke-width="0.90" stroke-linecap="round" stroke-linejoin="round" opacity="0.85"/>
<path d="M199.4 89.3 C200.5 93.8 202.9 109.1 205.7 116.3 C208.4 123.6 211.2 126.7 216.0 132.9 C220.9 139.2 227.8 146.1 234.7 153.7 C241.7 161.3 250.7 171.1 257.6 178.6 C264.5 186.2 273.2 195.6 276.3 199.0" fill="none" stroke="#9fb0cf" stroke-width="0.90" stroke-linecap="round" stroke-linejoin="round" opacity="0.85"/>
<path d="M286.7 0.0 C286.0 4.2 282.9 15.9 282.5 24.9 C282.2 33.9 285.3 42.2 284.6 54.0 C283.9 65.8 277.7 85.2 278.4 95.6 C279.0 105.9 286.7 108.0 288.7 116.3 C290.8 124.6 289.4 135.0 290.8 145.4 C292.2 155.8 294.6 169.7 297.1 178.6 C299.5 187.6 304.0 195.6 305.4 199.0" fill="none" stroke="#9fb0cf" stroke-width="0.90" stroke-linecap="round" stroke-linejoin="round" opacity="0.85"/>
<path d="M216.0 132.9 C215.0 137.1 208.4 146.9 209.8 157.9 C211.2 168.9 221.9 192.1 224.3 199.0" fill="none" stroke="#9fb0cf" stroke-width="0.90" stroke-linecap="round" stroke-linejoin="round" opacity="0.85"/>
<path d="M0.0 20.8 C4.2 21.1 15.2 22.9 24.9 22.9 C34.6 22.9 48.5 20.4 58.2 20.8 C67.9 21.1 76.5 22.2 83.1 24.9 C89.7 27.7 95.2 35.3 97.6 37.4" fill="none" stroke="#9fb0cf" stroke-width="0.90" stroke-linecap="round" stroke-linejoin="round" opacity="0.85"/>
<path d="M83.1 24.9 C83.8 29.8 87.9 44.3 87.2 54.0 C86.6 63.7 78.6 74.1 78.9 83.1 C79.3 92.1 88.3 99.7 89.3 108.0 C90.4 116.3 85.9 128.8 85.2 132.9" fill="none" stroke="#9fb0cf" stroke-width="0.90" stroke-linecap="round" stroke-linejoin="round" opacity="0.85"/>
<path d="M18.7 68.6 C22.5 68.9 31.5 70.6 41.5 70.6 C51.6 70.6 66.5 68.6 78.9 68.6 C91.4 68.6 110.1 70.3 116.3 70.6" fill="none" stroke="#9fb0cf" stroke-width="0.90" stroke-linecap="round" stroke-linejoin="round" opacity="0.85"/>
<path d="M0.0 143.3 C3.1 145.1 10.7 149.9 18.7 153.7 C26.7 157.5 42.9 164.1 47.8 166.2" fill="none" stroke="#9fb0cf" stroke-width="0.90" stroke-linecap="round" stroke-linejoin="round" opacity="0.85"/>
<path d="M99.7 124.6 C102.5 128.8 111.5 139.9 116.3 149.6 C121.2 159.3 125.3 174.6 128.8 182.8 C132.3 191.0 135.7 196.3 137.1 199.0" fill="none" stroke="#9fb0cf" stroke-width="0.90" stroke-linecap="round" stroke-linejoin="round" opacity="0.85"/>
<path d="M221.2 35.3 C225.9 36.7 240.1 42.6 249.3 43.6 C258.4 44.7 268.0 41.4 276.3 41.5 C284.6 41.7 292.5 43.3 299.1 44.7 C305.7 46.0 313.0 49.0 315.7 49.9" fill="none" stroke="#9fb0cf" stroke-width="0.90" stroke-linecap="round" stroke-linejoin="round" opacity="0.85"/>
<path d="M224.3 47.8 C227.8 49.5 238.5 54.2 245.1 58.2 C251.7 62.1 260.7 69.4 263.8 71.7" fill="none" stroke="#9fb0cf" stroke-width="0.90" stroke-linecap="round" stroke-linejoin="round" opacity="0.85"/>
<path d="M20.8 0.0 C21.1 4.2 23.5 14.5 22.9 24.9 C22.2 35.3 16.3 49.9 16.6 62.3 C17.0 74.8 20.1 89.3 24.9 99.7 C29.8 110.1 42.2 120.5 45.7 124.6" fill="none" stroke="#9fb0cf" stroke-width="0.90" stroke-linecap="round" stroke-linejoin="round" opacity="0.85"/>
<path d="M51.9 87.2 C52.6 92.1 58.5 106.6 56.1 116.3 C53.7 126.0 40.5 140.6 37.4 145.4" fill="none" stroke="#9fb0cf" stroke-width="0.90" stroke-linecap="round" stroke-linejoin="round" opacity="0.85"/>
<path d="M473.0 0.0 C475.8 4.5 482.4 20.8 489.6 27.0 C496.9 33.2 509.0 35.3 516.6 37.4 C524.3 39.5 532.2 34.3 535.3 39.5 C538.4 44.7 535.3 63.7 535.3 68.6" fill="none" stroke="#9fb0cf" stroke-width="0.90" stroke-linecap="round" stroke-linejoin="round" opacity="0.85"/>
<path d="M635.0 0.0 C634.7 4.8 637.1 18.7 633.0 29.1 C628.8 39.5 619.1 54.7 610.1 62.3 C601.1 69.9 586.6 69.2 579.0 74.8 C571.3 80.3 570.0 88.6 564.4 95.6 C558.9 102.5 549.5 108.7 545.7 116.3 C541.9 123.9 546.4 130.9 541.6 141.3 C536.7 151.6 521.5 169.0 516.6 178.6 C511.8 188.3 513.2 195.6 512.5 199.0" fill="none" stroke="#9fb0cf" stroke-width="0.90" stroke-linecap="round" stroke-linejoin="round" opacity="0.85"/>
<path d="M527.0 91.4 C530.8 92.1 543.6 94.5 549.9 95.6 C556.1 96.6 562.0 97.3 564.4 97.6" fill="none" stroke="#9fb0cf" stroke-width="0.90" stroke-linecap="round" stroke-linejoin="round" opacity="0.85"/>
<path d="M549.9 95.6 C550.6 91.1 556.1 74.4 554.0 68.6 C552.0 62.7 540.2 61.6 537.4 60.2" fill="none" stroke="#9fb0cf" stroke-width="0.90" stroke-linecap="round" stroke-linejoin="round" opacity="0.85"/>
<path d="M608.0 37.4 C610.1 34.6 615.7 26.0 620.5 20.8 C625.3 15.6 634.3 8.7 637.1 6.2" fill="none" stroke="#9fb0cf" stroke-width="0.90" stroke-linecap="round" stroke-linejoin="round" opacity="0.85"/>
<path d="M672.4 44.7 C669.3 47.3 658.9 56.6 653.7 60.2 C648.5 63.9 643.4 65.4 641.3 66.5" fill="none" stroke="#9fb0cf" stroke-width="0.90" stroke-linecap="round" stroke-linejoin="round" opacity="0.85"/>
<path d="M612.2 113.2 C612.9 118.2 616.3 134.5 616.3 143.3 C616.3 152.2 614.3 156.9 612.2 166.2 C610.1 175.5 605.3 193.5 603.9 199.0" fill="none" stroke="#9fb0cf" stroke-width="0.90" stroke-linecap="round" stroke-linejoin="round" opacity="0.85"/>
<path d="M541.6 143.3 C546.1 143.3 560.6 141.9 568.6 143.3 C576.5 144.7 582.1 151.6 589.3 151.6 C596.6 151.6 601.8 146.4 612.2 143.3 C622.6 140.2 641.3 137.4 651.7 132.9 C662.0 128.4 666.5 119.8 674.5 116.3 C682.5 112.9 691.1 112.2 699.4 112.2 C707.7 112.2 720.2 115.6 724.4 116.3" fill="none" stroke="#9fb0cf" stroke-width="0.90" stroke-linecap="round" stroke-linejoin="round" opacity="0.85"/>
<path d="M784.0 145.4 C777.5 146.1 758.5 145.4 745.1 149.6 C731.7 153.7 714.0 164.1 703.6 170.3 C693.2 176.6 686.6 182.2 682.8 187.0 C679.0 191.7 681.1 197.0 680.7 199.0" fill="none" stroke="#9fb0cf" stroke-width="0.90" stroke-linecap="round" stroke-linejoin="round" opacity="0.85"/>
<path d="M475.1 141.3 C476.8 144.7 483.1 155.4 485.5 162.0 C487.9 168.6 487.9 174.6 489.6 180.7 C491.4 186.9 494.8 196.0 495.9 199.0" fill="none" stroke="#9fb0cf" stroke-width="0.90" stroke-linecap="round" stroke-linejoin="round" opacity="0.85"/>
<path d="M392.0 6.2 C397.2 11.4 414.2 32.5 423.2 37.4 C432.2 42.2 438.0 35.0 446.0 35.3 C454.0 35.7 466.8 38.8 470.9 39.5" fill="none" stroke="#9fb0cf" stroke-width="0.90" stroke-linecap="round" stroke-linejoin="round" opacity="0.85"/>
<path d="M404.5 24.9 C404.8 31.2 404.8 52.6 406.5 62.3 C408.3 72.0 413.5 79.6 414.9 83.1" fill="none" stroke="#9fb0cf" stroke-width="0.90" stroke-linecap="round" stroke-linejoin="round" opacity="0.85"/>
<path d="M433.5 37.4 C434.9 40.2 441.2 48.5 441.9 54.0 C442.5 59.5 438.4 67.9 437.7 70.6" fill="none" stroke="#9fb0cf" stroke-width="0.90" stroke-linecap="round" stroke-linejoin="round" opacity="0.85"/>
<path d="M697.4 0.0 C697.7 6.2 696.3 28.4 699.4 37.4 C702.6 46.4 710.2 45.7 716.1 54.0 C721.9 62.3 729.2 74.8 734.8 87.2 C740.3 99.7 744.1 119.1 749.3 128.8 C754.5 138.5 763.1 142.6 765.9 145.4" fill="none" stroke="#9fb0cf" stroke-width="0.90" stroke-linecap="round" stroke-linejoin="round" opacity="0.85"/>
<path d="M908.6 0.0 C910.4 3.5 917.3 13.8 919.0 20.8 C920.8 27.7 917.5 35.5 919.0 41.5 C920.6 47.6 927.0 52.6 928.4 57.1 C929.8 61.6 928.5 64.2 927.3 68.6 C926.1 72.9 922.0 78.2 921.1 83.1 C920.2 87.9 922.0 95.2 922.1 97.6" fill="none" stroke="#9fb0cf" stroke-width="0.90" stroke-linecap="round" stroke-linejoin="round" opacity="0.85"/>
<path d="M928.4 57.1 C931.3 55.6 938.9 52.1 946.0 47.8 C953.1 43.4 963.3 35.0 971.0 31.2 C978.6 27.4 984.8 28.0 991.7 24.9 C998.7 21.8 1007.3 15.9 1012.5 12.5 C1017.7 9.0 1021.2 5.5 1022.9 4.2" fill="none" stroke="#9fb0cf" stroke-width="0.90" stroke-linecap="round" stroke-linejoin="round" opacity="0.85"/>
<path d="M1074.8 6.2 C1077.2 10.4 1084.9 23.2 1089.4 31.2 C1093.9 39.1 1098.4 47.4 1101.8 54.0 C1105.3 60.6 1108.4 64.4 1110.1 70.6 C1111.9 76.9 1112.9 83.8 1112.2 91.4 C1111.5 99.0 1108.1 109.1 1106.0 116.3 C1103.9 123.6 1103.6 129.5 1099.7 135.0 C1095.9 140.6 1088.0 146.4 1083.1 149.6 C1078.3 152.7 1075.5 150.6 1070.7 153.7 C1065.8 156.8 1056.8 165.8 1054.0 168.3" fill="none" stroke="#9fb0cf" stroke-width="0.90" stroke-linecap="round" stroke-linejoin="round" opacity="0.85"/>
<path d="M1110.1 70.6 C1111.2 69.2 1111.9 65.8 1116.4 62.3 C1120.9 58.9 1130.2 53.0 1137.1 49.9 C1144.1 46.7 1152.7 47.4 1157.9 43.6 C1163.1 39.8 1166.2 31.5 1168.3 27.0 C1170.4 22.5 1170.0 18.3 1170.4 16.6" fill="none" stroke="#9fb0cf" stroke-width="0.90" stroke-linecap="round" stroke-linejoin="round" opacity="0.85"/>
<path d="M1075.9 153.7 L1074.8 199.0" fill="none" stroke="#9fb0cf" stroke-width="0.90" stroke-linecap="round" stroke-linejoin="round" opacity="0.85"/>
<path d="M833.9 143.3 C839.4 139.9 857.1 128.8 867.1 122.6 C877.1 116.3 889.6 108.7 894.1 105.9" fill="none" stroke="#9fb0cf" stroke-width="0.90" stroke-linecap="round" stroke-linejoin="round" opacity="0.85"/>
<path d="M860.9 60.2 C860.9 63.4 863.6 71.3 860.9 78.9 C858.1 86.6 847.0 98.7 844.2 105.9 C841.5 113.2 842.9 118.1 844.2 122.6 C845.6 127.1 848.7 128.4 852.6 132.9 C856.4 137.4 864.3 144.7 867.1 149.6 C869.9 154.4 869.9 157.2 869.2 162.0 C868.5 166.9 864.0 175.9 862.9 178.6" fill="none" stroke="#9fb0cf" stroke-width="0.90" stroke-linecap="round" stroke-linejoin="round" opacity="0.85"/>
<path d="M784.0 24.9 C786.8 25.1 796.1 26.3 800.6 26.0 C805.1 25.6 809.3 23.4 811.0 22.9" fill="none" stroke="#9fb0cf" stroke-width="0.90" stroke-linecap="round" stroke-linejoin="round" opacity="0.85"/>
<path d="M840.1 14.5 C844.6 12.8 855.7 6.2 867.1 4.2 C878.5 2.1 901.7 2.4 908.6 2.1" fill="none" stroke="#9fb0cf" stroke-width="0.90" stroke-linecap="round" stroke-linejoin="round" opacity="0.85"/>
<path d="M1298.6 32.2 C1297.5 35.1 1294.8 41.4 1292.3 49.9 C1289.9 58.3 1288.9 72.0 1284.0 83.1 C1279.2 94.2 1269.5 105.2 1263.2 116.3 C1257.0 127.4 1251.5 137.8 1246.6 149.6 C1241.8 161.3 1237.1 178.7 1234.2 187.0 C1231.2 195.2 1229.8 197.0 1229.0 199.0" fill="none" stroke="#9fb0cf" stroke-width="0.90" stroke-linecap="round" stroke-linejoin="round" opacity="0.85"/>
<path d="M1381.7 145.4 C1381.5 148.9 1382.7 160.3 1380.6 166.2 C1378.5 172.1 1373.5 177.3 1369.2 180.7 C1364.9 184.2 1358.1 184.9 1354.6 187.0 C1351.2 189.0 1349.5 192.1 1348.4 193.2" fill="none" stroke="#9fb0cf" stroke-width="0.90" stroke-linecap="round" stroke-linejoin="round" opacity="0.85"/>
<path d="M35.3 0.0 C36.0 3.1 36.7 13.2 39.5 18.7 C42.2 24.2 48.1 26.0 51.9 33.2 C55.7 40.5 61.3 53.3 62.3 62.3 C63.4 71.3 57.1 79.6 58.2 87.2 C59.2 94.9 67.9 99.7 68.6 108.0 C69.2 116.3 61.6 127.4 62.3 137.1 C63.0 146.8 71.7 155.9 72.7 166.2 C73.7 176.5 69.2 193.5 68.6 199.0" fill="none" stroke="#a9b8d6" stroke-width="0.80" stroke-linecap="round" stroke-linejoin="round" opacity="0.7"/>
<path d="M0.0 87.2 C3.5 88.3 12.1 92.8 20.8 93.5 C29.4 94.2 40.9 91.7 51.9 91.4 C63.0 91.1 76.5 92.4 87.2 91.4 C98.0 90.4 106.6 85.9 116.3 85.2 C126.0 84.5 140.6 86.9 145.4 87.2" fill="none" stroke="#a9b8d6" stroke-width="0.80" stroke-linecap="round" stroke-linejoin="round" opacity="0.7"/>
<path d="M0.0 116.3 C4.2 117.4 15.9 119.8 24.9 122.6 C33.9 125.3 44.3 130.5 54.0 132.9 C63.7 135.4 74.1 137.1 83.1 137.1 C92.1 137.1 99.7 135.0 108.0 132.9 C116.3 130.9 124.6 127.4 132.9 124.6 C141.3 121.9 153.7 117.7 157.9 116.3" fill="none" stroke="#a9b8d6" stroke-width="0.80" stroke-linecap="round" stroke-linejoin="round" opacity="0.7"/>
<path d="M12.5 62.3 C13.5 66.5 18.7 78.2 18.7 87.2 C18.7 96.2 11.8 106.6 12.5 116.3 C13.2 126.0 22.2 136.4 22.9 145.4 C23.5 154.4 17.7 166.2 16.6 170.3" fill="none" stroke="#a9b8d6" stroke-width="0.80" stroke-linecap="round" stroke-linejoin="round" opacity="0.7"/>
<path d="M116.3 70.6 C115.6 74.1 111.8 83.8 112.2 91.4 C112.5 99.0 118.4 107.3 118.4 116.3 C118.4 125.3 111.1 137.1 112.2 145.4 C113.2 153.7 122.6 162.7 124.6 166.2" fill="none" stroke="#a9b8d6" stroke-width="0.80" stroke-linecap="round" stroke-linejoin="round" opacity="0.7"/>
<path d="M62.3 20.8 C67.2 19.4 82.4 12.1 91.4 12.5 C100.4 12.8 112.2 21.1 116.3 22.9" fill="none" stroke="#a9b8d6" stroke-width="0.80" stroke-linecap="round" stroke-linejoin="round" opacity="0.7"/>
<path d="M132.9 87.2 C132.3 92.1 127.4 108.7 128.8 116.3 C130.2 123.9 138.5 126.0 141.3 132.9 C144.0 139.9 145.1 146.9 145.4 157.9 C145.8 168.9 143.7 192.1 143.3 199.0" fill="none" stroke="#a9b8d6" stroke-width="0.80" stroke-linecap="round" stroke-linejoin="round" opacity="0.7"/>
<path d="M234.7 132.9 C234.4 138.5 230.9 155.2 232.7 166.2 C234.4 177.2 243.0 193.5 245.1 199.0" fill="none" stroke="#a9b8d6" stroke-width="0.80" stroke-linecap="round" stroke-linejoin="round" opacity="0.7"/>
<path d="M311.6 44.7 C313.7 40.7 319.2 28.2 324.1 20.8 C328.9 13.3 337.9 3.5 340.7 0.0" fill="none" stroke="#a9b8d6" stroke-width="0.80" stroke-linecap="round" stroke-linejoin="round" opacity="0.7"/>
<path d="M332.4 49.9 C335.8 49.5 346.2 46.4 353.1 47.8 C360.1 49.2 367.4 56.3 373.9 58.2 C380.4 60.1 389.0 59.0 392.0 59.2" fill="none" stroke="#a9b8d6" stroke-width="0.80" stroke-linecap="round" stroke-linejoin="round" opacity="0.7"/>
<path d="M299.1 44.7 C300.5 48.6 303.3 61.5 307.4 68.6 C311.6 75.6 318.5 81.4 324.1 87.2 C329.6 93.1 337.9 101.1 340.7 103.9" fill="none" stroke="#a9b8d6" stroke-width="0.80" stroke-linecap="round" stroke-linejoin="round" opacity="0.7"/>
<path d="M353.1 109.1 C352.8 115.1 349.0 134.5 351.1 145.4 C353.1 156.3 363.9 165.6 365.6 174.5 C367.3 183.4 362.1 194.9 361.4 199.0" fill="none" stroke="#a9b8d6" stroke-width="0.80" stroke-linecap="round" stroke-linejoin="round" opacity="0.7"/>
<path d="M0.0 41.5 C2.1 42.6 7.6 47.1 12.5 47.8 C17.3 48.5 23.2 46.6 29.1 45.7 C35.0 44.8 44.7 43.1 47.8 42.6" fill="none" stroke="#a9b8d6" stroke-width="0.80" stroke-linecap="round" stroke-linejoin="round" opacity="0.7"/>
<path d="M0.0 199.4 C2.8 197.3 11.8 189.0 16.6 187.0 C21.5 184.9 27.0 187.0 29.1 187.0" fill="none" stroke="#a9b8d6" stroke-width="0.80" stroke-linecap="round" stroke-linejoin="round" opacity="0.7"/>
<path d="M392.0 58.2 C395.5 58.9 405.8 60.6 412.8 62.3 C419.7 64.0 430.1 67.5 433.5 68.6" fill="none" stroke="#a9b8d6" stroke-width="0.80" stroke-linecap="round" stroke-linejoin="round" opacity="0.7"/>
<path d="M562.3 56.1 C565.1 56.8 572.7 58.2 579.0 60.2 C585.2 62.3 594.2 68.2 599.7 68.6 C605.3 68.9 610.1 63.4 612.2 62.3" fill="none" stroke="#a9b8d6" stroke-width="0.80" stroke-linecap="round" stroke-linejoin="round" opacity="0.7"/>
<path d="M495.9 86.2 C496.6 90.5 500.7 104.4 500.0 112.2 C499.3 120.0 493.1 129.5 491.7 132.9" fill="none" stroke="#a9b8d6" stroke-width="0.80" stroke-linecap="round" stroke-linejoin="round" opacity="0.7"/>
<path d="M446.0 101.8 C449.1 106.3 462.3 119.4 464.7 128.8 C467.1 138.1 459.5 146.2 460.6 157.9 C461.6 169.6 469.2 192.1 470.9 199.0" fill="none" stroke="#a9b8d6" stroke-width="0.80" stroke-linecap="round" stroke-linejoin="round" opacity="0.7"/>
<path d="M579.0 143.3 C578.3 147.8 573.4 161.1 574.8 170.3 C576.2 179.6 585.2 194.2 587.3 199.0" fill="none" stroke="#a9b8d6" stroke-width="0.80" stroke-linecap="round" stroke-linejoin="round" opacity="0.7"/>
<path d="M651.7 41.5 C651.0 38.1 646.1 27.7 647.5 20.8 C648.9 13.8 657.9 3.5 660.0 0.0" fill="none" stroke="#a9b8d6" stroke-width="0.80" stroke-linecap="round" stroke-linejoin="round" opacity="0.7"/>
<path d="M689.1 58.2 C687.3 62.3 679.0 74.8 678.7 83.1 C678.3 91.4 687.3 99.7 687.0 108.0 C686.6 116.3 678.3 128.8 676.6 132.9" fill="none" stroke="#a9b8d6" stroke-width="0.80" stroke-linecap="round" stroke-linejoin="round" opacity="0.7"/>
<path d="M728.5 74.8 C732.7 73.7 744.2 69.2 753.4 68.6 C762.7 67.9 778.9 70.3 784.0 70.6" fill="none" stroke="#a9b8d6" stroke-width="0.80" stroke-linecap="round" stroke-linejoin="round" opacity="0.7"/>
<path d="M716.1 99.7 C713.3 103.9 701.5 116.3 699.4 124.6 C697.4 132.9 705.0 141.9 703.6 149.6 C702.2 157.2 693.2 166.9 691.1 170.3" fill="none" stroke="#a9b8d6" stroke-width="0.80" stroke-linecap="round" stroke-linejoin="round" opacity="0.7"/>
<path d="M392.0 24.9 C394.1 27.7 403.1 35.3 404.5 41.5 C405.8 47.8 401.0 58.9 400.3 62.3" fill="none" stroke="#a9b8d6" stroke-width="0.80" stroke-linecap="round" stroke-linejoin="round" opacity="0.7"/>
<path d="M423.2 37.4 C422.1 33.2 415.2 18.7 416.9 12.5 C418.7 6.2 430.8 2.1 433.5 0.0" fill="none" stroke="#a9b8d6" stroke-width="0.80" stroke-linecap="round" stroke-linejoin="round" opacity="0.7"/>
<path d="M784.0 62.3 C788.2 63.4 800.6 68.6 808.9 68.6 C817.2 68.6 829.7 63.4 833.9 62.3" fill="none" stroke="#a9b8d6" stroke-width="0.80" stroke-linecap="round" stroke-linejoin="round" opacity="0.7"/>
<path d="M835.9 85.2 C840.4 85.9 853.6 89.7 862.9 89.3 C872.3 89.0 887.2 84.1 892.0 83.1" fill="none" stroke="#a9b8d6" stroke-width="0.80" stroke-linecap="round" stroke-linejoin="round" opacity="0.7"/>
<path d="M1054.0 41.5 C1058.2 43.6 1071.0 51.9 1079.0 54.0 C1086.9 56.1 1098.0 54.0 1101.8 54.0" fill="none" stroke="#a9b8d6" stroke-width="0.80" stroke-linecap="round" stroke-linejoin="round" opacity="0.7"/>
<path d="M0.0 55.0 C2.8 55.2 10.7 56.6 16.6 56.1 C22.5 55.6 30.1 54.2 35.3 51.9 C40.5 49.7 44.5 46.0 47.8 42.6 C51.1 39.1 53.0 34.8 55.0 31.2 C57.1 27.5 57.3 23.9 60.2 20.8 C63.2 17.7 68.2 15.1 72.7 12.5 C77.2 9.9 82.1 7.4 87.2 5.2 C92.4 2.9 101.1 0.0 103.9 -1.0" fill="none" stroke="#8d9fc8" stroke-width="2.58" stroke-linecap="round" stroke-linejoin="round" opacity="1"/>
<path d="M87.2 5.2 C92.1 5.4 108.7 5.7 116.3 6.2 C123.9 6.8 128.8 8.7 132.9 8.3 C137.1 8.0 136.4 5.2 141.3 4.2 C146.1 3.1 155.8 1.4 162.0 2.1 C168.3 2.8 172.4 6.1 178.6 8.3 C184.9 10.6 192.5 13.2 199.4 15.6 C206.3 18.0 214.3 20.9 220.2 22.9 C226.1 24.8 229.9 25.6 234.7 27.0 C239.6 28.4 243.4 29.8 249.3 31.2 C255.2 32.5 263.1 34.1 270.0 35.3 C277.0 36.5 283.9 36.9 290.8 38.4 C297.7 40.0 304.7 42.8 311.6 44.7 C318.5 46.6 326.8 48.1 332.4 49.9 C337.9 51.6 341.4 52.3 344.8 55.0 C348.3 57.8 350.7 62.5 353.1 66.5 C355.6 70.5 357.3 74.8 359.4 78.9 C361.4 83.1 363.5 87.2 365.6 91.4 C367.7 95.6 369.4 100.7 371.8 103.9 C374.3 107.0 376.8 108.5 380.1 110.1 C383.5 111.7 390.0 112.7 392.0 113.2" fill="none" stroke="#8d9fc8" stroke-width="2.58" stroke-linecap="round" stroke-linejoin="round" opacity="1"/>
<path d="M141.3 9.3 C142.6 11.3 147.3 16.4 149.6 20.8 C151.8 25.1 153.7 30.8 154.8 35.3 C155.8 39.8 156.0 43.3 155.8 47.8 C155.6 52.3 154.4 57.1 153.7 62.3 C153.0 67.5 152.2 74.1 151.6 78.9 C151.1 83.8 150.3 87.2 150.6 91.4 C150.9 95.6 151.5 99.7 153.7 103.9 C156.0 108.0 161.5 112.5 164.1 116.3 C166.7 120.1 168.1 123.9 169.3 126.7 C170.5 129.5 171.9 129.8 171.4 132.9 C170.9 136.1 167.2 141.6 166.2 145.4 C165.1 149.2 166.0 152.0 165.1 155.8 C164.3 159.6 162.0 163.8 161.0 168.3 C160.0 172.8 160.0 177.7 158.9 182.8 C157.9 187.9 155.4 196.3 154.8 199.0" fill="none" stroke="#8d9fc8" stroke-width="1.89" stroke-linecap="round" stroke-linejoin="round" opacity="1"/>
<path d="M132.9 9.3 C130.9 11.9 124.6 19.9 120.5 24.9 C116.3 29.9 110.4 35.3 108.0 39.5 C105.6 43.6 104.9 46.4 105.9 49.9 C107.0 53.3 110.8 57.5 114.3 60.2 C117.7 63.0 122.9 64.4 126.7 66.5 C130.5 68.6 134.0 71.0 137.1 72.7 C140.2 74.4 144.0 76.2 145.4 76.9" fill="none" stroke="#8d9fc8" stroke-width="1.89" stroke-linecap="round" stroke-linejoin="round" opacity="1"/>
<path d="M151.6 86.2 C154.1 86.0 158.9 85.0 166.2 84.8 C173.5 84.5 189.4 84.0 195.3 84.8 C201.1 85.5 197.3 88.6 201.5 89.3 C205.7 90.1 216.9 91.1 220.2 89.3 C223.5 87.6 220.5 82.7 221.2 78.9 C221.9 75.1 224.3 71.0 224.3 66.5 C224.3 62.0 221.9 57.5 221.2 51.9 C220.5 46.4 218.6 37.2 220.2 33.2 C221.7 29.3 228.3 31.5 230.6 28.0 C232.8 24.6 233.0 17.1 233.7 12.5 C234.4 7.8 234.6 2.1 234.7 0.0" fill="none" stroke="#8d9fc8" stroke-width="1.55" stroke-linecap="round" stroke-linejoin="round" opacity="1"/>
<path d="M0.0 182.8 C3.5 181.4 12.8 177.3 20.8 174.5 C28.7 171.7 37.4 168.6 47.8 166.2 C58.2 163.8 70.3 162.0 83.1 160.0 C95.9 157.9 110.8 155.5 124.6 153.7 C138.5 151.9 157.5 150.2 166.2 149.1 C174.8 148.1 172.4 149.3 176.6 147.5 C180.7 145.7 186.6 140.7 191.1 138.1 C195.6 135.5 198.7 133.0 203.6 131.9 C208.4 130.8 215.0 131.1 220.2 131.3 C225.4 131.5 230.2 132.0 234.7 132.9 C239.2 133.9 243.0 135.5 247.2 137.1 C251.4 138.7 256.2 141.9 259.7 142.3 C263.1 142.6 264.9 140.7 268.0 139.2 C271.1 137.6 273.2 133.6 278.4 132.9 C283.5 132.3 293.6 135.4 299.1 135.0 C304.7 134.7 307.4 132.9 311.6 130.9 C315.7 128.8 319.9 125.5 324.1 122.6 C328.2 119.6 331.7 115.5 336.5 113.2 C341.4 111.0 347.6 110.3 353.1 109.1 C358.7 107.8 365.3 107.5 369.8 105.9 C374.3 104.4 376.4 101.8 380.1 99.7 C383.8 97.6 390.0 94.5 392.0 93.5" fill="none" stroke="#8d9fc8" stroke-width="1.89" stroke-linecap="round" stroke-linejoin="round" opacity="1"/>
<path d="M274.2 199.0 C276.3 195.6 282.5 185.5 286.7 178.6 C290.8 171.8 295.0 164.1 299.1 157.9 C303.3 151.6 307.4 146.8 311.6 141.3 C315.7 135.7 319.2 130.9 324.1 124.6 C328.9 118.4 335.1 110.1 340.7 103.9 C346.2 97.6 353.1 93.1 357.3 87.2 C361.4 81.4 363.5 75.5 365.6 68.6 C367.7 61.6 368.0 53.0 369.8 45.7 C371.5 38.4 374.3 31.2 376.0 24.9 C377.7 18.7 378.9 12.5 380.1 8.3 C381.4 4.2 382.7 1.4 383.3 0.0" fill="none" stroke="#8d9fc8" stroke-width="2.75" stroke-linecap="round" stroke-linejoin="round" opacity="1"/>
<path d="M295.0 199.0 C299.1 196.3 310.2 187.9 319.9 182.8 C329.6 177.7 344.1 172.4 353.1 168.3 C362.1 164.1 367.4 161.0 373.9 157.9 C380.4 154.8 389.0 150.9 392.0 149.6" fill="none" stroke="#8d9fc8" stroke-width="1.89" stroke-linecap="round" stroke-linejoin="round" opacity="1"/>
<path d="M0.0 172.4 C2.1 173.5 7.6 176.2 12.5 178.6 C17.3 181.1 24.2 183.6 29.1 187.0 C33.9 190.3 39.5 197.0 41.5 199.0" fill="none" stroke="#8d9fc8" stroke-width="1.89" stroke-linecap="round" stroke-linejoin="round" opacity="1"/>
<path d="M41.5 199.0 C42.1 195.3 43.3 181.7 44.7 176.6 C46.0 171.4 49.0 169.6 49.9 168.3" fill="none" stroke="#8d9fc8" stroke-width="1.89" stroke-linecap="round" stroke-linejoin="round" opacity="1"/>
<path d="M414.9 83.1 C415.2 81.0 414.9 73.4 416.9 70.6 C419.0 67.9 424.0 66.1 427.3 66.5 C430.6 66.8 434.2 69.2 436.7 72.7 C439.1 76.2 438.9 85.5 441.9 87.2 C444.8 89.0 450.9 85.9 454.3 83.1 C457.8 80.3 459.9 75.1 462.6 70.6 C465.4 66.1 468.9 62.7 470.9 56.1 C473.0 49.5 474.1 38.4 475.1 31.2 C476.1 23.9 477.5 17.7 477.2 12.5 C476.8 7.3 473.7 2.1 473.0 0.0" fill="none" stroke="#8d9fc8" stroke-width="1.89" stroke-linecap="round" stroke-linejoin="round" opacity="1"/>
<path d="M441.9 87.2 C443.9 86.7 448.8 84.1 454.3 84.1 C459.9 84.1 468.2 86.9 475.1 87.2 C482.0 87.6 488.9 87.6 495.9 86.2 C502.8 84.8 509.0 81.9 516.6 78.9 C524.3 76.0 533.9 72.4 541.6 68.6 C549.2 64.7 555.4 60.1 562.3 56.1 C569.3 52.1 575.5 47.8 583.1 44.7 C590.7 41.5 600.4 38.9 608.0 37.4 C615.7 35.8 621.5 34.6 628.8 35.3 C636.1 36.0 644.4 40.0 651.7 41.5 C658.9 43.1 666.2 45.4 672.4 44.7 C678.7 44.0 683.5 39.6 689.1 37.4 C694.6 35.1 699.8 33.6 705.7 31.2 C711.6 28.7 717.8 25.4 724.4 22.9 C730.9 20.3 738.2 17.8 745.1 15.6 C752.1 13.3 759.4 11.1 765.9 9.3 C772.4 7.6 781.0 5.9 784.0 5.2" fill="none" stroke="#8d9fc8" stroke-width="1.89" stroke-linecap="round" stroke-linejoin="round" opacity="1"/>
<path d="M392.0 97.6 C395.5 97.6 405.8 98.0 412.8 97.6 C419.7 97.3 428.0 94.9 433.5 95.6 C439.1 96.2 442.5 99.7 446.0 101.8 C449.5 103.9 451.2 105.9 454.3 108.0 C457.4 110.1 463.0 113.2 464.7 114.3" fill="none" stroke="#8d9fc8" stroke-width="1.72" stroke-linecap="round" stroke-linejoin="round" opacity="1"/>
<path d="M504.2 122.6 C504.9 124.3 507.3 129.8 508.3 132.9 C509.4 136.1 510.1 139.9 510.4 141.3" fill="none" stroke="#8d9fc8" stroke-width="1.72" stroke-linecap="round" stroke-linejoin="round" opacity="1"/>
<path d="M392.0 124.6 C394.1 126.4 397.5 132.6 404.5 135.0 C411.4 137.4 424.2 137.8 433.5 139.2 C442.9 140.6 453.6 143.7 460.6 143.3 C467.5 143.0 470.9 138.7 475.1 137.1 C479.2 135.5 482.0 132.9 485.5 134.0 C488.9 135.0 491.7 142.1 495.9 143.3 C500.0 144.5 503.5 141.3 510.4 141.3 C517.3 141.3 530.8 141.6 537.4 143.3 C544.0 145.1 544.3 146.8 549.9 151.6 C555.4 156.5 564.8 166.9 570.6 172.4 C576.5 178.0 580.3 182.1 585.2 184.9 C590.0 187.6 593.8 188.0 599.7 189.0 C605.6 190.1 612.5 190.9 620.5 191.1 C628.5 191.3 640.9 190.8 647.5 190.1 C654.1 189.4 655.8 186.4 660.0 187.0 C664.1 187.5 668.6 191.2 672.4 193.2 C676.2 195.2 681.1 198.0 682.8 199.0" fill="none" stroke="#8d9fc8" stroke-width="2.58" stroke-linecap="round" stroke-linejoin="round" opacity="1"/>
<path d="M508.3 143.3 C512.5 145.8 525.6 153.0 533.3 157.9 C540.9 162.7 547.4 167.6 554.0 172.4 C560.6 177.3 567.2 182.5 572.7 187.0 C578.3 191.4 584.8 197.0 587.3 199.0" fill="none" stroke="#8d9fc8" stroke-width="2.24" stroke-linecap="round" stroke-linejoin="round" opacity="1"/>
<path d="M676.6 0.0 C675.2 3.1 671.4 12.1 668.3 18.7 C665.2 25.3 661.4 33.6 657.9 39.5 C654.4 45.4 650.3 48.5 647.5 54.0 C644.7 59.5 643.4 66.8 641.3 72.7 C639.2 78.6 635.9 83.4 635.0 89.3 C634.2 95.2 637.1 101.8 636.1 108.0 C635.0 114.3 629.7 121.2 628.8 126.7 C627.9 132.3 629.5 136.1 630.9 141.3 C632.3 146.4 634.7 151.6 637.1 157.9 C639.5 164.1 641.3 171.8 645.4 178.6 C649.6 185.5 659.3 195.6 662.0 199.0" fill="none" stroke="#8d9fc8" stroke-width="2.06" stroke-linecap="round" stroke-linejoin="round" opacity="1"/>
<path d="M672.4 44.7 C675.2 46.9 683.9 53.5 689.1 58.2 C694.2 62.8 700.1 67.9 703.6 72.7 C707.1 77.6 707.7 82.7 709.8 87.2 C711.9 91.7 713.6 94.9 716.1 99.7 C718.5 104.6 720.9 111.8 724.4 116.3 C727.8 120.8 733.4 122.2 736.8 126.7 C740.3 131.2 741.7 137.4 745.1 143.3 C748.6 149.2 753.1 156.5 757.6 162.0 C762.1 167.6 767.7 173.5 772.1 176.6 C776.5 179.7 782.0 180.0 784.0 180.7" fill="none" stroke="#8d9fc8" stroke-width="2.06" stroke-linecap="round" stroke-linejoin="round" opacity="1"/>
<path d="M705.7 0.0 C705.5 3.5 704.3 14.2 704.6 20.8 C705.0 27.4 705.5 33.6 707.7 39.5 C710.0 45.4 714.7 50.2 718.1 56.1 C721.6 62.0 725.1 68.9 728.5 74.8 C732.0 80.7 735.8 86.9 738.9 91.4 C742.0 95.9 744.1 98.3 747.2 101.8 C750.3 105.2 754.5 108.7 757.6 112.2 C760.7 115.6 761.5 118.4 765.9 122.6 C770.3 126.7 781.0 134.7 784.0 137.1" fill="none" stroke="#8d9fc8" stroke-width="2.06" stroke-linecap="round" stroke-linejoin="round" opacity="1"/>
<path d="M402.4 135.0 C402.0 138.1 401.5 146.8 400.3 153.7 C399.1 160.6 397.2 169.0 395.1 176.6 C393.0 184.1 389.1 195.3 387.8 199.0" fill="none" stroke="#8d9fc8" stroke-width="2.06" stroke-linecap="round" stroke-linejoin="round" opacity="1"/>
<path d="M392.0 149.6 C393.4 148.5 398.2 145.7 400.3 143.3 C402.5 141.0 404.1 136.8 404.9 135.4" fill="none" stroke="#8d9fc8" stroke-width="1.89" stroke-linecap="round" stroke-linejoin="round" opacity="1"/>
<path d="M392.0 145.4 C393.4 143.7 396.8 138.8 400.3 135.0 C403.8 131.2 407.2 127.1 412.8 122.6 C418.3 118.1 428.0 111.5 433.5 108.0 C439.1 104.6 443.9 102.8 446.0 101.8" fill="none" stroke="#8d9fc8" stroke-width="1.89" stroke-linecap="round" stroke-linejoin="round" opacity="1"/>
<path d="M734.8 196.3 L784.0 196.3" fill="none" stroke="#8d9fc8" stroke-width="2.58" stroke-linecap="round" stroke-linejoin="round" opacity="1"/>
<path d="M823.5 0.0 C824.3 2.8 828.1 10.4 828.7 16.6 C829.2 22.9 826.1 30.1 826.6 37.4 C827.1 44.7 830.2 52.3 831.8 60.2 C833.3 68.2 836.3 77.2 835.9 85.2 C835.6 93.1 830.6 100.4 829.7 108.0 C828.8 115.6 830.0 124.6 830.7 130.9 C831.4 137.1 833.7 140.2 833.9 145.4 C834.0 150.6 833.2 157.5 831.8 162.0 C830.4 166.5 828.0 168.6 825.5 172.4 C823.1 176.2 820.0 180.4 817.2 184.9 C814.5 189.3 810.3 196.6 808.9 199.0" fill="none" stroke="#8d9fc8" stroke-width="2.24" stroke-linecap="round" stroke-linejoin="round" opacity="1"/>
<path d="M826.6 38.4 C828.5 38.9 833.7 39.1 838.0 41.5 C842.3 44.0 847.0 48.8 852.6 53.0 C858.1 57.1 864.7 61.5 871.2 66.5 C877.8 71.5 885.8 77.2 892.0 83.1 C898.3 89.0 904.5 96.9 908.6 101.8 C912.8 106.6 914.2 107.0 916.9 112.2 C919.7 117.4 922.1 125.3 925.3 132.9 C928.4 140.6 932.4 149.9 935.6 157.9 C938.9 165.8 943.4 176.9 945.0 180.7" fill="none" stroke="#8d9fc8" stroke-width="2.06" stroke-linecap="round" stroke-linejoin="round" opacity="1"/>
<path d="M825.5 172.4 C827.6 173.5 832.5 177.0 838.0 178.6 C843.5 180.3 850.5 181.8 858.8 182.4 C867.1 183.0 877.5 182.0 887.9 182.4 C898.3 182.8 911.6 185.2 921.1 184.9 C930.6 184.6 937.7 181.1 945.0 180.7 C952.3 180.4 959.0 181.1 964.7 182.8 C970.4 184.5 974.8 188.4 979.3 191.1 C983.8 193.8 989.7 197.7 991.7 199.0" fill="none" stroke="#8d9fc8" stroke-width="2.06" stroke-linecap="round" stroke-linejoin="round" opacity="1"/>
<path d="M784.0 132.9 C786.1 135.4 793.0 145.2 796.5 147.5 C799.9 149.7 800.6 146.3 804.8 146.4 C808.9 146.6 816.2 147.3 821.4 148.5 C826.6 149.7 831.1 151.1 835.9 153.7 C840.8 156.3 847.0 160.3 850.5 164.1 C853.9 167.9 855.5 170.8 856.7 176.6 C857.9 182.4 857.6 195.3 857.7 199.0" fill="none" stroke="#8d9fc8" stroke-width="2.06" stroke-linecap="round" stroke-linejoin="round" opacity="1"/>
<path d="M784.0 178.6 C786.1 180.7 792.7 187.7 796.5 191.1 C800.3 194.5 805.1 197.7 806.9 199.0" fill="none" stroke="#8d9fc8" stroke-width="2.06" stroke-linecap="round" stroke-linejoin="round" opacity="1"/>
<path d="M784.0 164.1 C785.4 162.4 790.2 156.5 792.3 153.7 C794.4 150.9 795.8 148.5 796.5 147.5" fill="none" stroke="#8d9fc8" stroke-width="2.06" stroke-linecap="round" stroke-linejoin="round" opacity="1"/>
<path d="M1052.0 0.0 C1051.6 1.4 1049.5 4.2 1049.9 8.3 C1050.2 12.5 1053.4 19.4 1054.0 24.9 C1054.7 30.5 1055.8 36.0 1054.0 41.5 C1052.3 47.1 1045.7 50.5 1043.7 58.2 C1041.6 65.8 1041.4 78.9 1041.6 87.2 C1041.8 95.6 1045.4 101.1 1044.7 108.0 C1044.0 114.9 1037.9 122.9 1037.4 128.8 C1036.9 134.7 1039.9 137.8 1041.6 143.3 C1043.3 148.9 1046.1 156.1 1047.8 162.0 C1049.5 167.9 1051.4 172.5 1052.0 178.6 C1052.5 184.8 1051.1 195.6 1050.9 199.0" fill="none" stroke="#8d9fc8" stroke-width="2.06" stroke-linecap="round" stroke-linejoin="round" opacity="1"/>
<path d="M964.7 0.0 C967.1 0.5 972.7 2.8 979.3 3.1 C985.8 3.5 997.6 2.6 1004.2 2.1 C1010.8 1.6 1014.6 -1.2 1018.7 0.0 C1022.9 1.2 1023.9 7.8 1029.1 9.3 C1034.3 10.9 1045.4 10.9 1049.9 9.3 C1054.4 7.8 1055.1 1.6 1056.1 0.0" fill="none" stroke="#8d9fc8" stroke-width="2.06" stroke-linecap="round" stroke-linejoin="round" opacity="1"/>
<path d="M1074.8 0.0 C1076.5 1.4 1080.0 6.6 1085.2 8.3 C1090.4 10.0 1099.1 8.7 1106.0 10.4 C1112.9 12.1 1120.5 17.3 1126.8 18.7 C1133.0 20.1 1138.2 19.4 1143.4 18.7 C1148.6 18.0 1152.5 15.6 1157.9 14.5 C1163.3 13.5 1173.0 12.8 1176.0 12.5" fill="none" stroke="#8d9fc8" stroke-width="1.89" stroke-linecap="round" stroke-linejoin="round" opacity="1"/>
<path d="M1288.2 0.0 C1288.7 2.1 1289.6 8.0 1291.3 12.5 C1293.0 17.0 1297.3 23.7 1298.6 27.0 C1299.8 30.3 1296.1 28.7 1298.6 32.2 C1301.0 35.7 1307.9 42.1 1313.1 47.8 C1318.3 53.5 1324.2 59.9 1329.7 66.5 C1335.3 73.1 1341.1 80.3 1346.3 87.2 C1351.5 94.2 1357.4 101.1 1360.9 108.0 C1364.3 114.9 1363.6 122.9 1367.1 128.8 C1370.6 134.7 1377.1 139.2 1381.7 143.3 C1386.2 147.5 1391.3 148.2 1394.1 153.7 C1396.9 159.3 1395.2 171.4 1398.3 176.6 C1401.4 181.8 1406.9 181.1 1412.8 184.9 C1418.7 188.6 1430.1 196.6 1433.6 199.0" fill="none" stroke="#8d9fc8" stroke-width="2.24" stroke-linecap="round" stroke-linejoin="round" opacity="1"/>
<path d="M1176.0 14.5 C1180.2 14.7 1194.3 15.8 1200.9 15.6 C1207.5 15.4 1210.6 15.8 1215.5 13.5 C1220.3 11.3 1226.9 4.5 1230.0 2.1 C1233.1 -0.3 1233.5 -0.5 1234.2 -1.0" fill="none" stroke="#8d9fc8" stroke-width="1.89" stroke-linecap="round" stroke-linejoin="round" opacity="1"/>
<path d="M5.0 50.5 h15 q0.500 7 -7.5 12.500 q-8.0 -5.500 -7.5 -12.500 Z" fill="#3f6fc6"/>
<path d="M5.0 47.5 q7.5 1.600 15 0 v3.200 h-15 Z" fill="#d9534f"/>
<text x="12.5" y="58.6" font-size="8.5" font-weight="bold" text-anchor="middle" fill="#fff">87</text>
<path transform="translate(97.2 4.2)" d="M-8.3 -6.7 Q-4.8 -8.4 0 -6.5 Q4.8 -8.4 8.3 -6.7 C10.7 -1.500 10.3 3 7.7 5.0 Q4.8 7.0 0 8.0 Q-4.8 7.0 -7.7 5.0 C-10.3 3 -10.7 -1.500 -8.3 -6.7 Z" fill="#fff" stroke="#3a3a3a" stroke-width="0.9"/>
<text x="97.2" y="7.3" font-size="8.5" text-anchor="middle" fill="#333">264</text>
<path transform="translate(258.2 31.6)" d="M-8.3 -6.7 Q-4.8 -8.4 0 -6.5 Q4.8 -8.4 8.3 -6.7 C10.7 -1.500 10.3 3 7.7 5.0 Q4.8 7.0 0 8.0 Q-4.8 7.0 -7.7 5.0 C-10.3 3 -10.7 -1.500 -8.3 -6.7 Z" fill="#fff" stroke="#3a3a3a" stroke-width="0.9"/>
<text x="258.2" y="34.7" font-size="8.5" text-anchor="middle" fill="#333">264</text>
<ellipse cx="147.5" cy="78.9" rx="10" ry="6.6" fill="#fff" stroke="#3a3a3a" stroke-width="0.9"/>
<text x="147.5" y="82.0" font-size="8.5" text-anchor="middle" fill="#333">231</text>
<ellipse cx="154.1" cy="101.2" rx="8" ry="6.6" fill="#fff" stroke="#3a3a3a" stroke-width="0.9"/>
<text x="154.1" y="104.3" font-size="8.5" text-anchor="middle" fill="#333">96</text>
<path d="M307.8 133.6 h15 q0.500 7 -7.5 12.500 q-8.0 -5.500 -7.5 -12.500 Z" fill="#3f6fc6"/>
<path d="M307.8 130.6 q7.5 1.600 15 0 v3.200 h-15 Z" fill="#d9534f"/>
<text x="315.3" y="141.7" font-size="8.5" font-weight="bold" text-anchor="middle" fill="#fff">95</text>
<path transform="translate(384.3 69.6)" d="M-8.3 -6.7 Q-4.8 -8.4 0 -6.5 Q4.8 -8.4 8.3 -6.7 C10.7 -1.500 10.3 3 7.7 5.0 Q4.8 7.0 0 8.0 Q-4.8 7.0 -7.7 5.0 C-10.3 3 -10.7 -1.500 -8.3 -6.7 Z" fill="#fff" stroke="#3a3a3a" stroke-width="0.9"/>
<text x="384.3" y="72.7" font-size="8.5" text-anchor="middle" fill="#333">264</text>
<ellipse cx="386.8" cy="96.6" rx="8" ry="6.6" fill="#fff" stroke="#3a3a3a" stroke-width="0.9"/>
<text x="386.8" y="99.7" font-size="8.5" text-anchor="middle" fill="#333">42</text>
<path d="M373.8 111.8 h19 q0.500 7 -9.5 12.500 q-10.0 -5.500 -9.5 -12.500 Z" fill="#3f6fc6"/>
<path d="M373.8 108.8 q9.5 1.600 19 0 v3.200 h-19 Z" fill="#d9534f"/>
<text x="383.3" y="119.9" font-size="8.5" font-weight="bold" text-anchor="middle" fill="#fff">587</text>
<path transform="translate(372.5 158.9)" d="M-8.3 -6.7 Q-4.8 -8.4 0 -6.5 Q4.8 -8.4 8.3 -6.7 C10.7 -1.500 10.3 3 7.7 5.0 Q4.8 7.0 0 8.0 Q-4.8 7.0 -7.7 5.0 C-10.3 3 -10.7 -1.500 -8.3 -6.7 Z" fill="#fff" stroke="#3a3a3a" stroke-width="0.9"/>
<text x="372.5" y="162.0" font-size="8.5" text-anchor="middle" fill="#333">301</text>
<rect x="375.6" y="51.9" width="17.7" height="7.9" fill="#fff" stroke="#3a3a3a" stroke-width="0.8"/><text x="384.3" y="58.2" font-size="6.5" font-weight="bold" text-anchor="middle" fill="#333">ALT</text>
<ellipse cx="716.7" cy="28.0" rx="8" ry="6.6" fill="#fff" stroke="#3a3a3a" stroke-width="0.9"/>
<text x="716.7" y="31.1" font-size="8.5" text-anchor="middle" fill="#333">42</text>
<ellipse cx="703.6" cy="75.2" rx="8" ry="6.6" fill="#fff" stroke="#3a3a3a" stroke-width="0.9"/>
<text x="703.6" y="78.3" font-size="8.5" text-anchor="middle" fill="#333">43</text>
<path d="M552.4 158.6 h19 q0.500 7 -9.5 12.500 q-10.0 -5.500 -9.5 -12.500 Z" fill="#3f6fc6"/>
<path d="M552.4 155.6 q9.5 1.600 19 0 v3.200 h-19 Z" fill="#d9534f"/>
<text x="561.9" y="166.7" font-size="8.5" font-weight="bold" text-anchor="middle" fill="#fff">587</text>
<path d="M720.1 190.8 h19 q0.500 7 -9.5 12.500 q-10.0 -5.500 -9.5 -12.500 Z" fill="#3f6fc6"/>
<path d="M720.1 187.8 q9.5 1.600 19 0 v3.200 h-19 Z" fill="#d9534f"/>
<text x="729.6" y="198.9" font-size="8.5" font-weight="bold" text-anchor="middle" fill="#fff">587</text>
<path transform="translate(397.2 197.3)" d="M-8.3 -6.7 Q-4.8 -8.4 0 -6.5 Q4.8 -8.4 8.3 -6.7 C10.7 -1.500 10.3 3 7.7 5.0 Q4.8 7.0 0 8.0 Q-4.8 7.0 -7.7 5.0 C-10.3 3 -10.7 -1.500 -8.3 -6.7 Z" fill="#fff" stroke="#3a3a3a" stroke-width="0.9"/>
<text x="397.2" y="200.4" font-size="8.5" text-anchor="middle" fill="#333">117</text>
<ellipse cx="706.7" cy="-0.4" rx="8" ry="6.6" fill="#fff" stroke="#3a3a3a" stroke-width="0.9"/>
<text x="706.7" y="2.7" font-size="8.5" text-anchor="middle" fill="#333">33</text>
<path transform="translate(829.7 51.5)" d="M-6.5 -6.7 Q-3.9 -8.4 0 -6.5 Q3.9 -8.4 6.5 -6.7 C8.9 -1.500 8.6 3 6.0 5.0 Q3.9 7.0 0 8.0 Q-3.9 7.0 -6.0 5.0 C-8.6 3 -8.9 -1.500 -6.5 -6.7 Z" fill="#fff" stroke="#3a3a3a" stroke-width="0.9"/>
<text x="829.7" y="54.6" font-size="8.5" text-anchor="middle" fill="#333">13</text>
<ellipse cx="852.1" cy="53.0" rx="8" ry="6.6" fill="#fff" stroke="#3a3a3a" stroke-width="0.9"/>
<text x="852.1" y="56.1" font-size="8.5" text-anchor="middle" fill="#333">30</text>
<path transform="translate(1048.2 49.9)" d="M-6.5 -6.7 Q-3.9 -8.4 0 -6.5 Q3.9 -8.4 6.5 -6.7 C8.9 -1.500 8.6 3 6.0 5.0 Q3.9 7.0 0 8.0 Q-3.9 7.0 -6.0 5.0 C-8.6 3 -8.9 -1.500 -6.5 -6.7 Z" fill="#fff" stroke="#3a3a3a" stroke-width="0.9"/>
<text x="1048.2" y="53.0" font-size="8.5" text-anchor="middle" fill="#333">17</text>
<path transform="translate(1039.1 132.5)" d="M-6.5 -6.7 Q-3.9 -8.4 0 -6.5 Q3.9 -8.4 6.5 -6.7 C8.9 -1.500 8.6 3 6.0 5.0 Q3.9 7.0 0 8.0 Q-3.9 7.0 -6.0 5.0 C-8.6 3 -8.9 -1.500 -6.5 -6.7 Z" fill="#fff" stroke="#3a3a3a" stroke-width="0.9"/>
<text x="1039.1" y="135.6" font-size="8.5" text-anchor="middle" fill="#333">17</text>
<path transform="translate(795.4 154.8)" d="M-8.3 -6.7 Q-4.8 -8.4 0 -6.5 Q4.8 -8.4 8.3 -6.7 C10.7 -1.500 10.3 3 7.7 5.0 Q4.8 7.0 0 8.0 Q-4.8 7.0 -7.7 5.0 C-10.3 3 -10.7 -1.500 -8.3 -6.7 Z" fill="#fff" stroke="#3a3a3a" stroke-width="0.9"/>
<text x="795.4" y="157.9" font-size="8.5" text-anchor="middle" fill="#333">264</text>
<path transform="translate(931.1 184.5)" d="M-8.3 -6.7 Q-4.8 -8.4 0 -6.5 Q4.8 -8.4 8.3 -6.7 C10.7 -1.500 10.3 3 7.7 5.0 Q4.8 7.0 0 8.0 Q-4.8 7.0 -7.7 5.0 C-10.3 3 -10.7 -1.500 -8.3 -6.7 Z" fill="#fff" stroke="#3a3a3a" stroke-width="0.9"/>
<text x="931.1" y="187.6" font-size="8.5" text-anchor="middle" fill="#333">264</text>
<path transform="translate(1086.2 3.1)" d="M-6.5 -6.7 Q-3.9 -8.4 0 -6.5 Q3.9 -8.4 6.5 -6.7 C8.9 -1.500 8.6 3 6.0 5.0 Q3.9 7.0 0 8.0 Q-3.9 7.0 -6.0 5.0 C-8.6 3 -8.9 -1.500 -6.5 -6.7 Z" fill="#fff" stroke="#3a3a3a" stroke-width="0.9"/>
<text x="1086.2" y="6.2" font-size="8.5" text-anchor="middle" fill="#333">64</text>
<ellipse cx="1290.7" cy="12.0" rx="8" ry="6.6" fill="#fff" stroke="#3a3a3a" stroke-width="0.9"/>
<text x="1290.7" y="15.1" font-size="8.5" text-anchor="middle" fill="#333">45</text>
<ellipse cx="1330.3" cy="71.0" rx="8" ry="6.6" fill="#fff" stroke="#3a3a3a" stroke-width="0.9"/>
<text x="1330.3" y="74.1" font-size="8.5" text-anchor="middle" fill="#333">99</text>
<path transform="translate(1264.3 -2.5)" d="M-6.5 -6.7 Q-3.9 -8.4 0 -6.5 Q3.9 -8.4 6.5 -6.7 C8.9 -1.500 8.6 3 6.0 5.0 Q3.9 7.0 0 8.0 Q-3.9 7.0 -6.0 5.0 C-8.6 3 -8.9 -1.500 -6.5 -6.7 Z" fill="#fff" stroke="#3a3a3a" stroke-width="0.9"/>
<text x="1264.3" y="0.6" font-size="8.5" text-anchor="middle" fill="#333">64</text>
<g font-size="11.8" fill="#3b3f44" stroke="#fff" stroke-width="2.6" stroke-linejoin="round" paint-order="stroke" style="paint-order:stroke">
<text x="-7.9" y="40.9" class="ml">Knightdale</text>
<text x="118.4" y="7.9" class="ml">Zebulon</text>
<text x="79.6" y="46.7" class="ml">Wendell</text>
<text x="22.2" y="86.6" class="ml">Shotwell</text>
<text x="170.3" y="83.7" class="ml">Emit</text>
<text x="60.2" y="124.6" class="ml">Archer Lodge</text>
<text x="127.1" y="147.9" class="ml">Jordan</text>
<text x="17.2" y="163.7" class="ml">Clayton</text>
<text x="38.4" y="196.7" class="ml">Powhatan</text>
<text x="313.0" y="64.8" class="ml">Sims</text>
<text x="447.5" y="23.9" class="ml">Elm City</text>
<text x="416.5" y="96.6" class="ml">Wilson</text>
<text x="467.2" y="122.6" class="ml">Drivers Store</text>
<text x="609.5" y="39.9" class="ml">Pinetops</text>
<text x="575.4" y="72.7" class="ml">Macclesfield</text>
<text x="608.5" y="142.7" class="ml">Fountain</text>
<text x="741.6" y="111.8" class="ml">Belvoir</text>
<text x="743.5" y="15.6" class="ml">Conetoe</text>
<text x="387.4" y="177.6" class="ml">Black Creek</text>
<text x="462.6" y="204.6" class="ml">Stantonsburg</text>
<text x="805.4" y="23.9" class="ml">Bethel</text>
<text x="847.4" y="15.0" class="ml">Parmele</text>
<text x="975.3" y="60.2" class="ml">Bear Grass</text>
<text x="886.0" y="104.9" class="ml">Stokes</text>
<text x="814.3" y="161.0" class="ml">House</text>
<text x="798.5" y="199.0" class="ml">Greenville</text>
<text x="1028.1" y="178.6" class="ml">Old Ford</text>
<text x="1144.4" y="20.1" class="ml">Jamesville</text>
<text x="1331.4" y="102.8" class="ml">Wenona</text>
<text x="1311.0" y="141.9" class="ml">Sixth Siding</text>
<text x="1175.0" y="200.5" class="ml">Pinetown</text>
<text x="1291.3" y="200.5" class="ml">Wilkinson</text>
</g>
<text x="1453.3" y="51.9" font-size="13" font-style="italic" fill="#2f8fae" transform="rotate(11 1453.3 51.9)">Phelps Lake</text>
<g font-size="18.5" font-weight="normal" stroke="#fff" stroke-width="1.5" paint-order="stroke" style="paint-order:stroke" letter-spacing="-0.8"><text x="9" y="192.5"><tspan fill="#4285f4">G</tspan><tspan fill="#ea4335">o</tspan><tspan fill="#fbbc05">o</tspan><tspan fill="#4285f4">g</tspan><tspan fill="#34a853">l</tspan><tspan fill="#ea4335">e</tspan></text></g>
</g>
<rect x="1314" y="186" width="120" height="14" fill="#fff" opacity="0.72"/><rect x="1436" y="186" width="36" height="14" fill="#fff" opacity="0.72"/><rect x="1475" y="186" width="94" height="14" fill="#fff" opacity="0.72"/>
<g font-size="10" fill="#111"><text x="1319" y="196">Map data ©2025 Google</text><text x="1440.5" y="196">Terms</text><text x="1480" y="196">Report a map error</text></g>
<rect x="1519" y="95" width="40" height="81" fill="#fff" rx="2"/>
<path d="M1524 135.500H1554" stroke="#e6e6e6" stroke-width="1"/>
<path d="M1531 114.700H1547M1539 106.700V122.700M1531 155.600H1547" stroke="#666" stroke-width="2" fill="none"/>
</svg>
<!--/MAP-->
</div>
<div id="handle"></div>

<!-- PLANNER -->
<div id="plan">
<!--PLAN-->
<div id="phead">
<div class="pbtn" style="left:12px;width:38px"><svg width="13" height="12" viewBox="0 0 15 14" style="margin-top:11px"><path d="M7 1.5 L1.8 7 L7 12.5 M2 7 H13.500" fill="none" stroke="#222" stroke-width="2.500" stroke-linecap="round" stroke-linejoin="round"/></svg></div>
<div class="ptxt" id="pt1" style="left:54px">11/26/25 7:00 am</div>
<div class="pbtn" style="left:666px;width:39px"><svg width="14" height="14" viewBox="0 0 14 14" style="margin-top:10px"><path d="M2.2 7H11.800" stroke="#222" stroke-width="2.500" stroke-linecap="round"/></svg></div>
<div class="pbtn" id="pview" style="left:709px;width:74px">View <i class="caret"></i></div>
<div class="pbtn" id="pedit" style="left:793px;width:67px;background:#c9d3d1;color:#464e4d">Edit <i class="caret" style="border-top-color:#464e4d"></i></div>
<div class="pbtn" style="left:864px;width:39px"><svg width="14" height="14" viewBox="0 0 14 14" style="margin-top:10px"><path d="M2.2 7H11.800M7 2.200V11.800" stroke="#222" stroke-width="2.500" stroke-linecap="round"/></svg></div>
<div class="ptxt" id="pt2" style="right:54px">11/27/25 7:00 am</div>
<div class="pbtn" style="left:1518px;width:39px"><svg width="13" height="12" viewBox="0 0 15 14" style="margin-top:11px"><path d="M8 1.5 L13.2 7 L8 12.5 M13 7 H1.500" fill="none" stroke="#222" stroke-width="2.500" stroke-linecap="round" stroke-linejoin="round"/></svg></div>
</div>
<div class="abs" style="left:0;top:48px;width:175px;height:50px;background:#fff"></div>
<div class="abs" id="save" style="left:5px;top:56px;width:165px;height:34px;border:1px solid #d4d4d4;border-radius:4px;background:#fff"><div class="abs" style="left:0;top:0;width:138px;height:32px;line-height:32px;text-align:center;font-size:14.400px;color:#222">Save</div><div class="abs" style="left:138px;top:0;width:1px;height:32px;background:#d4d4d4"></div><i class="caret" style="position:absolute;left:146px;top:14.500px;border-top-color:#222"></i></div>
<div class="abs" style="left:177px;top:48px;width:985px;height:24px;overflow:hidden"><div class="abs dg" style="left:-404.8px;top:0;width:1389.8px;height:24px"></div></div>
<div class="abs" style="left:1162px;top:48px;width:406px;height:24px;overflow:hidden"><div class="abs dg" style="left:0;top:0;width:1389.8px;height:24px"></div></div>
<div class="abs" style="left:1162px;top:48px;width:1px;height:24px;background:#333"></div>
<div class="abs" id="dlabel" style="left:435px;top:48px;width:70px;height:24px;line-height:23px;font-size:14.5px;color:#222;text-align:center;white-space:nowrap;letter-spacing:-0.2px">11/26/2025</div>
<div class="abs" style="left:177px;top:72px;width:1391px;height:26px;background:#fbfaf9;border-top:1px solid #333"></div>
<div class="tl" style="left:181px">7 AM</div>
<div class="tl" style="left:239px">8 AM</div>
<div class="tl" style="left:297px">9 AM</div>
<div class="tl" style="left:355px">10 AM</div>
<div class="tl" style="left:413px">11 AM</div>
<div class="tl" style="left:471px">12 PM</div>
<div class="tl" style="left:529px">1 PM</div>
<div class="tl" style="left:587px">2 PM</div>
<div class="tl" style="left:645px">3 PM</div>
<div class="tl" style="left:702px">4 PM</div>
<div class="tl" style="left:760px">5 PM</div>
<div class="tl" style="left:818px">6 PM</div>
<div class="tl" style="left:876px">7 PM</div>
<div class="tl" style="left:934px">8 PM</div>
<div class="tl" style="left:992px">9 PM</div>
<div class="tl" style="left:1050px">10 PM</div>
<div class="tl" style="left:1108px">11 PM</div>
<div class="tl" style="left:1166px">12 AM</div>
<div class="tl" style="left:1224px">1 AM</div>
<div class="tl" style="left:1282px">2 AM</div>
<div class="tl" style="left:1339px">3 AM</div>
<div class="tl" style="left:1397px">4 AM</div>
<div class="tl" style="left:1455px">5 AM</div>
<div class="tl" style="left:1513px">6 AM</div>
<div class="vl" style="left:235px;top:73px;height:25px"></div>
<div class="vl" style="left:293px;top:73px;height:25px"></div>
<div class="vl" style="left:351px;top:73px;height:25px"></div>
<div class="vl" style="left:409px;top:73px;height:25px"></div>
<div class="vl" style="left:467px;top:73px;height:25px"></div>
<div class="vl" style="left:525px;top:73px;height:25px"></div>
<div class="vl" style="left:583px;top:73px;height:25px"></div>
<div class="vl" style="left:641px;top:73px;height:25px"></div>
<div class="vl" style="left:698px;top:73px;height:25px"></div>
<div class="vl" style="left:756px;top:73px;height:25px"></div>
<div class="vl" style="left:814px;top:73px;height:25px"></div>
<div class="vl" style="left:872px;top:73px;height:25px"></div>
<div class="vl" style="left:930px;top:73px;height:25px"></div>
<div class="vl" style="left:988px;top:73px;height:25px"></div>
<div class="vl" style="left:1046px;top:73px;height:25px"></div>
<div class="vl" style="left:1104px;top:73px;height:25px"></div>
<div class="vl" style="left:1162px;top:73px;height:25px"></div>
<div class="vl" style="left:1220px;top:73px;height:25px"></div>
<div class="vl" style="left:1278px;top:73px;height:25px"></div>
<div class="vl" style="left:1335px;top:73px;height:25px"></div>
<div class="vl" style="left:1393px;top:73px;height:25px"></div>
<div class="vl" style="left:1451px;top:73px;height:25px"></div>
<div class="vl" style="left:1509px;top:73px;height:25px"></div>
<div class="vl" style="left:1567px;top:73px;height:25px"></div>
<div class="abs" style="left:177px;top:98px;width:985px;height:200px;overflow:hidden"><div class="abs rg" style="left:-404.8px;top:0;width:1389.8px;height:200px"></div></div>
<div class="abs" style="left:1162px;top:98px;width:406px;height:200px;overflow:hidden"><div class="abs rg" style="left:0;top:0;width:1389.8px;height:200px"></div></div>
<div class="vl" style="left:235px;top:105px;height:193px"></div>
<div class="vl" style="left:293px;top:105px;height:193px"></div>
<div class="vl" style="left:351px;top:105px;height:193px"></div>
<div class="vl" style="left:409px;top:105px;height:193px"></div>
<div class="vl" style="left:467px;top:105px;height:193px"></div>
<div class="vl" style="left:525px;top:105px;height:193px"></div>
<div class="vl" style="left:583px;top:105px;height:193px"></div>
<div class="vl" style="left:641px;top:105px;height:193px"></div>
<div class="vl" style="left:698px;top:105px;height:193px"></div>
<div class="vl" style="left:756px;top:105px;height:193px"></div>
<div class="vl" style="left:814px;top:105px;height:193px"></div>
<div class="vl" style="left:872px;top:105px;height:193px"></div>
<div class="vl" style="left:930px;top:105px;height:193px"></div>
<div class="vl" style="left:988px;top:105px;height:193px"></div>
<div class="vl" style="left:1046px;top:105px;height:193px"></div>
<div class="vl" style="left:1104px;top:105px;height:193px"></div>
<div class="vl" style="left:1220px;top:105px;height:193px"></div>
<div class="vl" style="left:1278px;top:105px;height:193px"></div>
<div class="vl" style="left:1335px;top:105px;height:193px"></div>
<div class="vl" style="left:1393px;top:105px;height:193px"></div>
<div class="vl" style="left:1451px;top:105px;height:193px"></div>
<div class="vl" style="left:1509px;top:105px;height:193px"></div>
<div class="vl" style="left:1567px;top:105px;height:193px"></div>
<div class="abs" style="left:1161px;top:105px;width:4px;height:192px;background:#000"></div>
<div class="abs" style="left:0;top:98px;width:1568px;height:7px;background:#3a3a3a"></div>
<div class="abs" style="left:0;top:104px;width:178px;height:1px;background:#000"></div>
<div class="abs" style="left:178px;top:101px;width:1390px;height:4px;background:#000"></div>
<div class="abs" style="left:0;top:154px;width:1568px;height:4px;background:#000"></div>
<div class="abs" style="left:0;top:207px;width:1568px;height:4px;background:#000"></div>
<div class="abs" style="left:175px;top:48px;width:3px;height:250px;background:#333"></div>
<div class="rl" id="rl0" style="top:105px"><svg width="13" height="11" viewBox="0 0 13 11"><path d="M1.2 1.300H11.600M1.200 5.500H11.600M1.200 9.700H11.600" stroke="#222" stroke-width="2.300" stroke-linecap="round"/></svg><span>Pickup</span></div>
<div class="rl" id="rl1" style="top:158px"><svg width="13" height="11" viewBox="0 0 13 11"><path d="M1.2 1.300H11.600M1.200 5.500H11.600M1.200 9.700H11.600" stroke="#222" stroke-width="2.300" stroke-linecap="round"/></svg><span>Staffed</span></div>
<div class="rl" id="rl2" style="top:211px"><svg width="13" height="11" viewBox="0 0 13 11"><path d="M1.2 1.300H11.600M1.200 5.500H11.600M1.200 9.700H11.600" stroke="#222" stroke-width="2.300" stroke-linecap="round"/></svg><span>Delivery</span></div>
<div class="abs" id="item" style="left:323px;top:210px;width:28.5px;height:49.5px;background:linear-gradient(180deg,#5bc5c5 0%,#5fa3a8 50%,#628790 100%);border:1px solid #75868a;border-top-color:#58b9ba;box-shadow:0 3px 7px rgba(0,0,0,.28)"><div class="abs" style="left:3.2px;top:2.800px;width:20px;height:20px;border-radius:50%;background:#fff;border:2px solid #6b7b82;font-weight:bold;font-size:12.5px;line-height:16px;text-align:center;color:#1d1d1d">A</div><svg class="abs" style="left:7px;top:28px" width="12.500" height="11" viewBox="0 0 12.500 11"><path d="M0 1.200H12.500M0 5.100H12.500M0 9H12.500" stroke="#fff" stroke-width="2.100"/></svg></div>
<!--/PLAN-->
</div>

<!-- TASKBAR -->
<div id="task">
<!-- weather -->
<svg class="abs" style="left:12px;top:12px" width="28" height="24" viewBox="0 0 28 24">
<circle cx="17.500" cy="7.500" r="6" fill="#f6a123"/><circle cx="16" cy="6.500" r="4" fill="#fbc04a" opacity=".6"/>
<path d="M6.500 21.500 a5 5 0 0 1 0.500 -9.900 a6.500 6.500 0 0 1 12.300 1.600 a4.200 4.200 0 0 1 1.200 8.300 Z" fill="#dfe6f6" stroke="#aab9e0" stroke-width="1"/>
<path d="M6.500 21.500 h14 a4.200 4.200 0 0 0 3 -3.500 q-8 3 -20.500 0.500 a5 5 0 0 0 3.500 3 Z" fill="#b9c6ea"/>
</svg>
<div class="abs" style="left:46px;top:8.700px;font-size:12px;line-height:14px;color:#1b1b1b;white-space:nowrap">40°F</div>
<div class="abs" id="wx" style="left:45px;top:23.700px;font-size:12.500px;line-height:15px;color:#444;white-space:nowrap;letter-spacing:-0.100px">Mostly cloudy</div>
<!-- start -->
<svg class="abs" style="left:678px;top:12px" width="23" height="23" viewBox="0 0 23 23"><defs><linearGradient id="wg" x1="0" y1="0" x2="1" y2="1"><stop offset="0" stop-color="#35b4f4"/><stop offset="1" stop-color="#0f7fd6"/></linearGradient></defs><g fill="url(#wg)"><rect x="0" y="0" width="11" height="11" rx="1"/><rect x="12" y="0" width="11" height="11" rx="1"/><rect x="0" y="12" width="11" height="11" rx="1"/><rect x="12" y="12" width="11" height="11" rx="1"/></g></svg>
<!-- search pill -->
<div class="abs" style="left:714px;top:8px;width:220px;height:31px;border-radius:16px;background:#eff7fb;border:1px solid #d4e3ea"></div>
<svg class="abs" style="left:725px;top:16px" width="16" height="16" viewBox="0 0 16 16"><circle cx="6.500" cy="6.500" r="5" fill="none" stroke="#222" stroke-width="1.700"/><path d="M10.300 10.300 L14.500 14.500" stroke="#222" stroke-width="1.900" stroke-linecap="round"/></svg>
<div class="abs" style="left:751px;top:8px;height:31px;line-height:30px;font-size:13px;color:#555;white-space:nowrap">Search</div>
<!-- tree + house -->
<svg class="abs" style="left:887px;top:12.500px" width="37" height="26" viewBox="0 0 42 30">
<path d="M8 1 L3.500 9 H5.500 L1.500 16.500 H4 L0.500 24 H15.500 L12 16.500 H14.500 L10.500 9 H12.500 Z" fill="#3f9a3c"/><rect x="6.500" y="24" width="3" height="4" fill="#8a5a2b"/><circle cx="6" cy="13" r="1.100" fill="#e8c93a"/><circle cx="10" cy="19" r="1.100" fill="#e24a3a"/><circle cx="5" cy="21" r="1.100" fill="#e8c93a"/>
<path d="M17 10 L28.500 2 L40 10 V12 H17 Z" fill="#b5533a"/><rect x="18.500" y="11" width="20" height="17" fill="#c98a62"/><path d="M18.500 15 H38.500 M18.500 20 H38.500 M18.500 24.500 H38.500 M24 11 V28 M33 11 V28" stroke="#7b3f2b" stroke-width="1.200"/><rect x="20" y="16" width="5" height="4" fill="#e9eef2"/><rect x="26.500" y="16" width="5" height="4" fill="#e9eef2"/><rect x="33" y="16" width="4.500" height="4" fill="#e9eef2"/><rect x="20" y="22" width="5" height="4" fill="#e9eef2"/><rect x="33" y="22" width="4.500" height="4" fill="#e9eef2"/><path d="M19 21.500 q3 2.500 6 0 M26 21.500 q3 2.500 6 0 M32.500 21.500 q3 2.500 6 0" stroke="#3f9a3c" stroke-width="1.300" fill="none"/>
</svg>
<!-- task view -->
<svg class="abs" style="left:945.500px;top:11.500px" width="26" height="23" viewBox="0 0 26 23"><rect x="6.500" y="0.500" width="18" height="15" rx="2" fill="#f3f3f3" stroke="#d8dde0"/><rect x="0.500" y="6" width="18" height="16" rx="2" fill="#2b2b2b"/><path d="M6.500 6 H18.500 V15.500 H6.500 Z" fill="#8a8a8a" opacity=".75"/></svg>
<!-- folder -->
<svg class="abs" style="left:989px;top:12px" width="26" height="23" viewBox="0 0 26 23"><path d="M1 3 a2 2 0 0 1 2 -2 h6 l3 3 h11 a2 2 0 0 1 2 2 v14 a2 2 0 0 1 -2 2 h-20 a2 2 0 0 1 -2 -2 Z" fill="#e9a91f"/><path d="M1 7 h24 v13 a2 2 0 0 1 -2 2 h-20 a2 2 0 0 1 -2 -2 Z" fill="#ffd34f"/><rect x="7" y="15" width="12" height="7" rx="1.500" fill="#2a86d8"/></svg>
<!-- store -->
<svg class="abs" style="left:1033px;top:10px" width="25" height="26" viewBox="0 0 25 26"><path d="M7.500 6.500 V4.500 a1.800 1.800 0 0 1 1.800 -1.800 h6.400 a1.800 1.800 0 0 1 1.800 1.800 V6.500" fill="none" stroke="#4db2ee" stroke-width="1.700"/><path d="M1 7.500 a1.500 1.500 0 0 1 1.500 -1.500 h20 a1.500 1.500 0 0 1 1.500 1.500 v14.500 a3 3 0 0 1 -3 3 h-17 a3 3 0 0 1 -3 -3 Z" fill="#1d4f94"/><rect x="7.500" y="10" width="4.500" height="4.500" fill="#f25022"/><rect x="13" y="10" width="4.500" height="4.500" fill="#7fba00"/><rect x="7.500" y="15.500" width="4.500" height="4.500" fill="#00a4ef"/><rect x="13" y="15.500" width="4.500" height="4.500" fill="#ffb900"/></svg>
<!-- outlook -->
<svg class="abs" style="left:1076px;top:11px" width="27" height="25" viewBox="0 0 27 25"><path d="M6 9 L16.500 1.500 L26 8.500 V20 a3 3 0 0 1 -3 3 H9 a3 3 0 0 1 -3 -3 Z" fill="#1b6fd0"/><path d="M8 11 L17 4 L26 10 L17 17 Z" fill="#64b5f6"/><path d="M6 14 L26 9.500 V20 a3 3 0 0 1 -3 3 H9 a3 3 0 0 1 -3 -3 Z" fill="#2f8fe6" opacity=".9"/><path d="M12 23 L26 12 V20 a3 3 0 0 1 -3 3 Z" fill="#1556a8"/><rect x="0.500" y="10.500" width="12" height="12" rx="2" fill="#0f4fa8"/><circle cx="6.500" cy="16.500" r="3" fill="none" stroke="#fff" stroke-width="1.700"/></svg>
<!-- chrome (active) -->
<div class="abs" style="left:1115px;top:4px;width:39px;height:39px;border-radius:4px;background:#e3f1f6;border:1px solid #d6e8ee"></div>
<svg class="abs" style="left:1121.500px;top:11px" width="25" height="25" viewBox="0 0 48 48"><circle cx="24" cy="24" r="22" fill="#fff"/><path d="M24 2 a22 22 0 0 1 19.050 11 H24 a11 11 0 0 0 -9.530 5.500 L5.200 12.600 A22 22 0 0 1 24 2 Z" fill="#ea4335"/><path d="M43.050 13 a22 22 0 0 1 -18.100 33 l9.500 -16.500 a11 11 0 0 0 0 -11 L24 13 Z" fill="#fbbc04"/><path d="M24.950 46 A22 22 0 0 1 5.200 12.600 l9.300 16.900 a11 11 0 0 0 9.500 5.500 a11 11 0 0 0 5.500 -1.500 Z" fill="#34a853"/><circle cx="24" cy="24" r="9" fill="#4285f4" stroke="#fff" stroke-width="2.500"/></svg>
<div class="abs" style="left:1135.300px;top:6px;width:15.500px;height:15.500px;border-radius:8px;background:#45525a;color:#fff;font-size:9px;line-height:15.500px;text-align:center">D</div>
<div class="abs" style="left:1126px;top:39px;width:16px;height:3px;border-radius:2px;background:#1a73d8"></div>
<!-- xbox -->
<svg class="abs" style="left:1166px;top:11px" width="25" height="25" viewBox="0 0 25 25"><rect x="0" y="0" width="25" height="25" rx="2.500" fill="#107c10"/><circle cx="12.500" cy="12.500" r="9" fill="#fff"/><path d="M6.500 6.500 q3 0 6 3 q3 -3 6 -3 q2.500 3.500 2 9 q-3 -5 -8 -9 q-5 4 -8 9 q-0.500 -5.500 2 -9 Z" fill="#107c10"/><path d="M12.500 12 q4.500 3.500 6.500 7.500 q-3 2.500 -6.500 2.500 q-3.500 0 -6.500 -2.500 q2 -4 6.500 -7.500 Z" fill="#107c10"/></svg>
<div class="abs" style="left:1177.500px;top:6px;width:20.500px;height:15.500px;border-radius:8px;background:#1a6fd0;color:#fff;font-size:11px;letter-spacing:-0.400px;line-height:15.500px;text-align:center">20</div>
<div class="abs" style="left:1175px;top:40px;width:6px;height:2.500px;border-radius:2px;background:#7f8b90"></div>
<!-- monitor -->
<svg class="abs" style="left:1211.300px;top:14px" width="21" height="19.500" viewBox="0 0 23 22"><rect x="0" y="0" width="23" height="15.500" rx="1.500" fill="#3b5f86"/><rect x="1" y="1" width="21" height="13" fill="#3f97dd"/><path d="M1 1 H22 V8 Q11 12 1 7 Z" fill="#58aeea" opacity=".7"/><rect x="10" y="15" width="3" height="4" fill="#3d4a52"/><rect x="6" y="19" width="11" height="1.800" rx="0.900" fill="#3d4a52"/></svg>
<div class="abs" style="left:1219px;top:40px;width:6px;height:2.500px;border-radius:2px;background:#7f8b90"></div>
<!-- clock -->
<div class="abs" style="right:18.300px;top:8.400px;font-size:11.600px;line-height:14px;color:#1b1b1b;text-align:right;white-space:nowrap">12:42 PM</div>
<div class="abs" style="right:18px;top:23.200px;font-size:12px;letter-spacing:0.280px;line-height:14px;color:#1b1b1b;text-align:right;white-space:nowrap">11/25/2025</div>
</div>
</body>
</html>
